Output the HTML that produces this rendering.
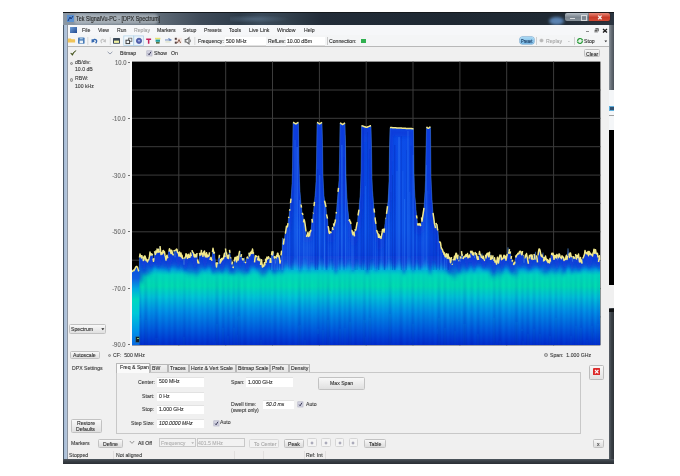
<!DOCTYPE html>
<html><head><meta charset="utf-8"><style>
html,body{margin:0;padding:0;background:#fff;width:680px;height:476px;overflow:hidden;position:relative}
.t{position:absolute;white-space:nowrap;font-family:"Liberation Sans", sans-serif;line-height:1.2;transform:scaleX(0.86);transform-origin:0 50%;filter:blur(0.2px);-webkit-text-stroke:0.12px}
</style></head><body>
<div style="position:absolute;left:63px;top:12px;width:551px;height:452px;background:#383e44;border-radius:0 0 1.5px 1.5px"></div><div style="position:absolute;left:609px;top:25px;width:5px;height:65px;background:linear-gradient(90deg,#9098a0,#6a727a 40%,#4a525a)"></div><div style="position:absolute;left:609px;top:308px;width:5px;height:152px;background:linear-gradient(90deg,#5a6068,#3a4046 50%,#2e3338)"></div><div style="position:absolute;left:609px;top:308.5px;width:5px;height:3px;background:#101214"></div><div style="position:absolute;left:63px;top:459px;width:551px;height:5px;background:linear-gradient(#50565e,#3a4046 40%,#2a2e34)"></div><div style="position:absolute;left:63px;top:25px;width:5px;height:434px;background:linear-gradient(90deg,#4a5868 0,#4a5868 20%,#a9bdd6 30%,#b4c6dc 70%,#7c8088 100%)"></div><div style="position:absolute;left:63px;top:12px;width:551px;height:13px;background:linear-gradient(90deg,#8c98a4 0%,#7a8692 7%,#606c78 17%,#3e4a58 25%,#2e3c4a 32%,#3a4a5a 36%,#34424f 40%,#222c38 47%,#1e2832 70%,#202a34 88%,#2a3440 100%)"></div><div style="position:absolute;left:63px;top:12px;width:551px;height:1px;background:#14181c"></div><div style="position:absolute;left:230px;top:15px;width:60px;height:8px;background:radial-gradient(ellipse at 40% 50%,rgba(120,150,180,0.35),rgba(0,0,0,0) 70%)"></div><div style="position:absolute;left:74px;top:14px;width:84px;height:9.5px;background:rgba(200,208,214,0.55);border-radius:4px;filter:blur(1.2px)"></div><svg style="position:absolute;left:66px;top:14px" width="9" height="9"><rect x="1" y="1" width="7" height="7" fill="#5a90d0"/><path d="M2,7 L4,3 L5,5 L7,2" stroke="#1a3a80" stroke-width="1" fill="none"/></svg><div class="t" style="left:76px;top:15.4px;font-size:6.3px;color:#262626;">Tek SignalVu-PC - [DPX Spectrum]</div><div style="position:absolute;left:549px;top:16.5px;width:15px;height:8px;background:rgba(110,160,220,0.75);border-radius:50%;filter:blur(1.5px)"></div><div style="position:absolute;left:564.5px;top:13.2px;width:24.5px;height:7.8px;background:linear-gradient(#b4bcc4,#7a848e 55%,#8a949c);border-radius:2px 0 0 2px;box-shadow:0 0 0 0.5px rgba(40,50,60,0.6)"></div><div style="position:absolute;left:570px;top:17.5px;width:5px;height:1.3px;background:rgba(240,240,240,0.8)"></div><div style="position:absolute;left:580.5px;top:15px;width:4px;height:3.5px;border:0.7px solid rgba(240,240,240,0.75)"></div><div style="position:absolute;left:589px;top:13.2px;width:20.5px;height:7.8px;background:linear-gradient(#e88878,#c83a28 55%,#d04a34);border-radius:0 2px 2px 0;box-shadow:0 0 0 0.5px rgba(60,20,20,0.6)"></div><svg style="position:absolute;left:596.5px;top:14.8px" width="6" height="5"><path d="M1.2,0.6 L4.6,4.2 M4.6,0.6 L1.2,4.2" fill="none" stroke="#f4f4f4" stroke-width="1.3"/></svg><div style="position:absolute;left:68px;top:25px;width:541px;height:434px;background:#f0f0f0"></div><div style="position:absolute;left:68px;top:25px;width:541px;height:10px;background:#f6f7f9"></div><div style="position:absolute;left:70px;top:27px;width:7px;height:6px;background:linear-gradient(135deg,#70a0d8,#204890)"></div><div class="t" style="left:82px;top:27.2px;font-size:6px;color:#2e2e2e;">File</div><div class="t" style="left:98px;top:27.2px;font-size:6px;color:#2e2e2e;">View</div><div class="t" style="left:117px;top:27.2px;font-size:6px;color:#2e2e2e;">Run</div><div class="t" style="left:134px;top:27.2px;font-size:6px;color:#a0a0a0;">Replay</div><div class="t" style="left:157px;top:27.2px;font-size:6px;color:#2e2e2e;">Markers</div><div class="t" style="left:183px;top:27.2px;font-size:6px;color:#2e2e2e;">Setup</div><div class="t" style="left:204px;top:27.2px;font-size:6px;color:#2e2e2e;">Presets</div><div class="t" style="left:229px;top:27.2px;font-size:6px;color:#2e2e2e;">Tools</div><div class="t" style="left:249px;top:27.2px;font-size:6px;color:#2e2e2e;">Live Link</div><div class="t" style="left:277px;top:27.2px;font-size:6px;color:#2e2e2e;">Window</div><div class="t" style="left:303.5px;top:27.2px;font-size:6px;color:#2e2e2e;">Help</div><div style="position:absolute;left:586px;top:31.2px;width:3px;height:0.8px;background:#8a8a8a"></div><svg style="position:absolute;left:593.8px;top:28px" width="5" height="5"><rect x="1.4" y="0.3" width="3.2" height="3" fill="#333"/><rect x="0.4" y="1.5" width="3.2" height="3" fill="#333" stroke="#f6f7f9" stroke-width="0.5"/><rect x="1.2" y="2.6" width="1.6" height="1.2" fill="#bbb"/></svg><svg style="position:absolute;left:602px;top:27.6px" width="6" height="6"><path d="M1,1 L5,4.6 M5,1 L1,4.6" stroke="#1a1a1a" stroke-width="1.3"/></svg><div style="position:absolute;left:68px;top:35px;width:541px;height:11px;background:#f4f5f6"></div><div style="position:absolute;left:68px;top:46px;width:541px;height:1px;background:#b8b8b8"></div><svg style="position:absolute;left:0;top:0" width="680" height="60">
<g filter="url(#ib)">
<path d="M67.8,39.2 q0,-0.8 0.8,-0.8 h2.2 l0.8,0.8 h3 q0.5,0 0.5,0.6 v2.6 h-7.3z" fill="#f0c458"/>
<rect x="78" y="37.6" width="6.6" height="6.2" rx="0.7" fill="#4a7cb8"/>
<rect x="79.6" y="40.6" width="3.4" height="2.6" fill="#eef4f8"/>
<rect x="79.8" y="37.8" width="3" height="1.6" fill="#9ec0e0"/>
<line x1="87.8" y1="37" x2="87.8" y2="45" stroke="#d0d0d0" stroke-width="0.8"/>
<path d="M92.2,39.2 l0,2.6 l2.2,-0.6 M92.6,41.2 q1.6,-3 3.6,-1.2 q1.2,1.2 -0.6,3.2" fill="none" stroke="#3468b0" stroke-width="1.3"/>
<path d="M105.4,39.2 l0,2.6 l-2.2,-0.6 M105,41.2 q-1.6,-3 -3.6,-1.2 q-1.2,1.2 0.6,3.2" fill="none" stroke="#c4c4c4" stroke-width="1.1"/>
<line x1="110.3" y1="37" x2="110.3" y2="45" stroke="#d0d0d0" stroke-width="0.8"/>
<rect x="113" y="38" width="7" height="5.7" rx="0.6" fill="#3a4a58"/>
<rect x="114" y="40.6" width="5" height="2.3" fill="#f0f0a0"/>
<rect x="123.8" y="35.9" width="9.8" height="9.5" fill="#f2f8fc" stroke="#b4d4ea" stroke-width="0.8"/>
<rect x="133.8" y="35.9" width="9.6" height="9.5" fill="#eaf3fa" stroke="#b4d4ea" stroke-width="0.8"/>
<rect x="128.6" y="38.2" width="3.2" height="3.2" fill="none" stroke="#707070" stroke-width="0.9"/>
<rect x="126" y="40.2" width="3.6" height="3.4" fill="#f2f8fc" stroke="#404040" stroke-width="1"/>
<circle cx="139" cy="40.8" r="2.6" fill="#5868b8" stroke="#404c98" stroke-width="0.8"/>
<circle cx="139" cy="40.8" r="0.8" fill="#d8e0f0"/>
<path d="M146.2,38.6 h4.9 v1.3 h-1.7 v3.8 h-1.5 v-3.8 h-1.7z" fill="#c8205c"/>
<rect x="155" y="37.8" width="5.4" height="1.6" fill="#e8e070"/>
<rect x="155.6" y="39.6" width="4.4" height="2.2" fill="#20a0a0"/>
<rect x="156" y="42" width="3.6" height="1.6" fill="#5a7040"/>
<path d="M165,40 h5.8 M168.4,38.4 l2.6,1.6 l-2.6,1.6" fill="none" stroke="#6a88c0" stroke-width="1.1"/>
<rect x="165.4" y="40.8" width="5" height="2" fill="#e4e8d8"/>
<rect x="174.8" y="37.8" width="7" height="5.9" fill="#f4e6e2"/>
<rect x="174.8" y="37.8" width="2" height="2" fill="#504040"/>
<rect x="174.8" y="41.7" width="2" height="2" fill="#504040"/>
<path d="M177.4,43 l1.6,-3.4 l1.6,3.4" fill="none" stroke="#805040" stroke-width="0.9"/>
<path d="M185.2,39.6 h1.4 l2.4,-1.9 v6.2 l-2.4,-1.9 h-1.4z" fill="none" stroke="#6a6a6a" stroke-width="1.1"/>
<path d="M190,39.4 q1,1.4 0,2.8" fill="none" stroke="#6a6a6a" stroke-width="0.9"/>
<line x1="194.8" y1="37" x2="194.8" y2="45" stroke="#d0d0d0" stroke-width="0.8"/>
</g>
<defs><filter id="ib"><feGaussianBlur stdDeviation="0.25"/></filter></defs>
</svg><div class="t" style="left:198.2px;top:38.2px;font-size:6px;color:#2e2e2e;">Frequency:</div><div style="position:absolute;left:224.5px;top:37px;width:41px;height:8px;background:#fff;border-bottom:1px solid #e0e0e0"></div><div class="t" style="left:225.8px;top:38.2px;font-size:6px;color:#2e2e2e;">500 MHz</div><div class="t" style="left:268px;top:38.2px;font-size:6px;color:#2e2e2e;">RefLev:</div><div style="position:absolute;left:286px;top:37px;width:39px;height:8px;background:#fff;border-bottom:1px solid #e0e0e0"></div><div class="t" style="left:287px;top:38.2px;font-size:6px;color:#2e2e2e;">10.00 dBm</div><div style="position:absolute;left:326.5px;top:37px;width:1px;height:8px;background:#c8c8c8"></div><div class="t" style="left:329px;top:38.2px;font-size:6px;color:#2e2e2e;">Connection:</div><div style="position:absolute;left:360.5px;top:38.8px;width:5px;height:4px;background:#30b050"></div><div style="position:absolute;left:519.5px;top:37.3px;width:14px;height:6.5px;background:linear-gradient(#a8d8f4,#78b8e4);border-radius:2.2px;box-shadow:0 0 0 0.5px #5a98c8"></div><div class="t" style="left:520.9px;top:38.8px;font-size:4.6px;color:#10305a;">Preset</div><div style="position:absolute;left:536px;top:37px;width:1px;height:8px;background:#d0d0d0"></div><div style="position:absolute;left:540.3px;top:38.9px;width:3.2px;height:3.2px;border-radius:50%;background:#b8b8b8;box-shadow:0 0 0 0.6px #d0d0d0"></div><div class="t" style="left:546.2px;top:38.2px;font-size:6px;color:#a8a8a8;">Replay</div><div class="t" style="left:567.5px;top:37.9px;font-size:6px;color:#a0a0a0;">-</div><div style="position:absolute;left:574px;top:37px;width:1px;height:8px;background:#d0d0d0"></div><svg style="position:absolute;left:576px;top:37px" width="8" height="8"><circle cx="4" cy="4" r="2.5" fill="#e8f4e8"/><path d="M6.4,4 A2.4,2.4 0 0 1 2,5.4 M1.6,4 A2.4,2.4 0 0 1 6,2.6" fill="none" stroke="#2a9a3a" stroke-width="1.2"/><path d="M0.6,4.4 L2.6,4.4 L1.6,6.2z M7.4,3.6 L5.4,3.6 L6.4,1.8z" fill="#2a9a3a"/></svg><div class="t" style="left:584.3px;top:38.2px;font-size:6px;color:#2e2e2e;">Stop</div><svg style="position:absolute;left:604px;top:39.8px" width="4" height="3"><path d="M0.4,0.4 L3.2,0.4 L1.8,2.2z" fill="#333"/></svg><svg style="position:absolute;left:69.5px;top:50px" width="7" height="6"><path d="M0.6,3.4 Q1.6,3.8 2.4,5.4 Q3.8,2 6.2,0.5 Q3.6,1.8 2.3,3.9 Q1.6,3.2 0.6,3.4z" fill="#3a4a10" stroke="#3a4a10" stroke-width="0.5"/></svg><svg style="position:absolute;left:106.5px;top:51px" width="6" height="4"><path d="M0.6,0.8 L3,3 L5.4,0.8" fill="none" stroke="#98a0b0" stroke-width="1"/></svg><div class="t" style="left:120px;top:50.3px;font-size:6px;color:#2e2e2e;">Bitmap</div><svg style="position:absolute;left:146.0px;top:49.6px" width="7" height="7"><rect x="0.8" y="0.8" width="5.2" height="5.2" fill="#d4d4e2" stroke="#b0b0c4" stroke-width="0.6"/><path d="M2.2,3.6 L3.1,4.8 L4.9,1.8" fill="none" stroke="#282848" stroke-width="0.9"/></svg><div class="t" style="left:153.8px;top:50.3px;font-size:6px;color:#2e2e2e;">Show</div><div class="t" style="left:170.5px;top:50.3px;font-size:6px;color:#2e2e2e;">On</div><div style="position:absolute;left:584.3px;top:49px;width:15.4px;height:8px;border:0.7px solid #c0c0c0;border-radius:1.5px;background:linear-gradient(#f6f6f6,#e0e0e0);box-sizing:border-box"></div><div class="t" style="left:585.5px;top:50.6px;font-size:6px;color:#2e2e2e;">Clear</div><div style="position:absolute;left:69.8px;top:61.8px;width:1.6px;height:1.6px;border-radius:50%;border:0.7px solid #8a8a8a;background:#c8c8c8"></div><div class="t" style="left:75px;top:59.4px;font-size:6px;color:#3a3a3a;">dB/div:</div><div class="t" style="left:75px;top:66.4px;font-size:6px;color:#3a3a3a;">10.0 dB</div><div style="position:absolute;left:69.8px;top:78.4px;width:1.6px;height:1.6px;border-radius:50%;border:0.7px solid #8a8a8a;background:#c8c8c8"></div><div class="t" style="left:75px;top:75.4px;font-size:6px;color:#3a3a3a;">RBW:</div><div class="t" style="left:75px;top:82.8px;font-size:6px;color:#3a3a3a;">100 kHz</div><div class="t" style="right:554px;top:58.8px;font-size:6.4px;color:#6a6a6a;transform:scaleX(0.92);transform-origin:100% 50%">10.0</div><div style="position:absolute;left:128.2px;top:61.6px;width:1.6px;height:0.9px;background:#707070"></div><div class="t" style="right:554px;top:115.3px;font-size:6.4px;color:#6a6a6a;transform:scaleX(0.92);transform-origin:100% 50%">-10.0</div><div style="position:absolute;left:128.2px;top:118.1px;width:1.6px;height:0.9px;background:#707070"></div><div class="t" style="right:554px;top:171.8px;font-size:6.4px;color:#6a6a6a;transform:scaleX(0.92);transform-origin:100% 50%">-30.0</div><div style="position:absolute;left:128.2px;top:174.6px;width:1.6px;height:0.9px;background:#707070"></div><div class="t" style="right:554px;top:228.4px;font-size:6.4px;color:#6a6a6a;transform:scaleX(0.92);transform-origin:100% 50%">-50.0</div><div style="position:absolute;left:128.2px;top:231.2px;width:1.6px;height:0.9px;background:#707070"></div><div class="t" style="right:554px;top:285.0px;font-size:6.4px;color:#6a6a6a;transform:scaleX(0.92);transform-origin:100% 50%">-70.0</div><div style="position:absolute;left:128.2px;top:287.8px;width:1.6px;height:0.9px;background:#707070"></div><div class="t" style="right:554px;top:341.4px;font-size:6.4px;color:#6a6a6a;transform:scaleX(0.92);transform-origin:100% 50%">-90.0</div><div style="position:absolute;left:128.2px;top:344.2px;width:1.6px;height:0.9px;background:#707070"></div><div style="position:absolute;left:130.4px;top:61px;width:1.4px;height:285px;background:#fafafa"></div><div style="position:absolute;left:69px;top:324px;width:37px;height:10px;border:0.7px solid #c2c2c2;border-radius:1.5px;background:linear-gradient(#f8f8f8,#e0e0e0);box-sizing:border-box"></div><div class="t" style="left:71px;top:326.4px;font-size:6px;color:#2e2e2e;">Spectrum</div><svg style="position:absolute;left:100.6px;top:328px" width="4" height="3"><path d="M0.3,0.3 L3.3,0.3 L1.8,2.3z" fill="#222"/></svg><div style="position:absolute;left:70px;top:350.5px;width:30px;height:8.5px;border:0.7px solid #c2c2c2;border-radius:1.5px;background:linear-gradient(#f8f8f8,#e0e0e0);box-sizing:border-box"></div><div class="t" style="left:73px;top:352.2px;font-size:6px;color:#2e2e2e;">Autoscale</div><div style="position:absolute;left:107.5px;top:353.8px;width:1.6px;height:1.6px;border-radius:50%;border:0.7px solid #8a8a8a;background:#c8c8c8"></div><div class="t" style="left:112.6px;top:352.0px;font-size:6px;color:#3a3a3a;">CF:&nbsp; 500 MHz</div><div style="position:absolute;left:544px;top:353.3px;width:1.6px;height:1.6px;border-radius:50%;border:0.7px solid #8a8a8a;background:#c8c8c8"></div><div class="t" style="left:549.8px;top:351.8px;font-size:6px;color:#3a3a3a;">Span:&nbsp; 1.000 GHz</div><div class="t" style="left:72px;top:364.6px;font-size:6px;color:#3a3a3a;">DPX Settings</div><div style="position:absolute;left:115.6px;top:371.5px;width:465.5px;height:62px;border:0.8px solid #c8c8c8;box-sizing:border-box;background:#f0f0f0"></div><div style="position:absolute;left:115.6px;top:362.5px;width:34.6px;height:10px;border:0.8px solid #b8b8b8;border-bottom:none;background:#fafafa;box-sizing:border-box"></div><div class="t" style="left:120.1px;top:364.4px;font-size:6px;color:#2e2e2e;">Freq &amp; Span</div><div style="position:absolute;left:150.2px;top:364px;width:17.4px;height:7.5px;border:0.8px solid #b8b8b8;border-bottom:none;background:linear-gradient(#f2f2f2,#e4e4e4);box-sizing:border-box"></div><div class="t" style="left:152.39999999999998px;top:365.0px;font-size:6px;color:#2e2e2e;">BW</div><div style="position:absolute;left:167.6px;top:364px;width:21.0px;height:7.5px;border:0.8px solid #b8b8b8;border-bottom:none;background:linear-gradient(#f2f2f2,#e4e4e4);box-sizing:border-box"></div><div class="t" style="left:169.79999999999998px;top:365.0px;font-size:6px;color:#2e2e2e;">Traces</div><div style="position:absolute;left:188.6px;top:364px;width:47.2px;height:7.5px;border:0.8px solid #b8b8b8;border-bottom:none;background:linear-gradient(#f2f2f2,#e4e4e4);box-sizing:border-box"></div><div class="t" style="left:190.79999999999998px;top:365.0px;font-size:6px;color:#2e2e2e;">Horiz &amp; Vert Scale</div><div style="position:absolute;left:235.8px;top:364px;width:34.2px;height:7.5px;border:0.8px solid #b8b8b8;border-bottom:none;background:linear-gradient(#f2f2f2,#e4e4e4);box-sizing:border-box"></div><div class="t" style="left:238.0px;top:365.0px;font-size:6px;color:#2e2e2e;">Bitmap Scale</div><div style="position:absolute;left:270px;top:364px;width:18.7px;height:7.5px;border:0.8px solid #b8b8b8;border-bottom:none;background:linear-gradient(#f2f2f2,#e4e4e4);box-sizing:border-box"></div><div class="t" style="left:272.2px;top:365.0px;font-size:6px;color:#2e2e2e;">Prefs</div><div style="position:absolute;left:288.7px;top:364px;width:21.3px;height:7.5px;border:0.8px solid #b8b8b8;border-bottom:none;background:linear-gradient(#f2f2f2,#e4e4e4);box-sizing:border-box"></div><div class="t" style="left:290.9px;top:365.0px;font-size:6px;color:#2e2e2e;">Density</div><div class="t" style="left:137.8px;top:378.6px;font-size:6px;color:#3a3a3a;">Center:</div><div style="position:absolute;left:157.3px;top:377.0px;width:46.3px;height:9.0px;background:#fff;border-top:0.6px solid #e2e2e2"></div><div class="t" style="left:159px;top:378.4px;font-size:6px;color:#2e2e2e;">500 MHz</div><div class="t" style="left:142px;top:392.8px;font-size:6px;color:#3a3a3a;">Start:</div><div style="position:absolute;left:157.3px;top:391.6px;width:46.3px;height:8.2px;background:#fff;border-top:0.6px solid #e2e2e2"></div><div class="t" style="left:159px;top:392.6px;font-size:6px;color:#2e2e2e;">0 Hz</div><div class="t" style="left:142px;top:406.1px;font-size:6px;color:#3a3a3a;">Stop:</div><div style="position:absolute;left:157.3px;top:405.3px;width:46.3px;height:8.1px;background:#fff;border-top:0.6px solid #e2e2e2"></div><div class="t" style="left:159px;top:406.1px;font-size:6px;color:#2e2e2e;">1.000 GHz</div><div class="t" style="left:131.4px;top:419.8px;font-size:6px;color:#3a3a3a;">Step Size:</div><div style="position:absolute;left:157.3px;top:418.8px;width:46.3px;height:8.4px;background:#fff;border-top:0.6px solid #e2e2e2"></div><div class="t" style="left:159px;top:419.8px;font-size:6px;color:#2e2e2e;font-style:italic">100.0000 MHz</div><svg style="position:absolute;left:212.7px;top:419.5px" width="7" height="7"><rect x="0.8" y="0.8" width="5.2" height="5.2" fill="#d4d4e2" stroke="#b0b0c4" stroke-width="0.6"/><path d="M2.2,3.6 L3.1,4.8 L4.9,1.8" fill="none" stroke="#282848" stroke-width="0.9"/></svg><div class="t" style="left:219.5px;top:419.4px;font-size:6px;color:#3a3a3a;">Auto</div><div class="t" style="left:231.3px;top:378.6px;font-size:6px;color:#3a3a3a;">Span:</div><div style="position:absolute;left:246.4px;top:377.2px;width:47.0px;height:9.0px;background:#fff;border-top:0.6px solid #e2e2e2"></div><div class="t" style="left:248px;top:378.5px;font-size:6px;color:#2e2e2e;">1.000 GHz</div><div style="position:absolute;left:317.6px;top:376.6px;width:47.8px;height:13.2px;border:0.8px solid #c2c2c2;border-radius:1.5px;background:linear-gradient(#f8f8f8,#e0e0e0);box-sizing:border-box"></div><div class="t" style="left:330px;top:380.4px;font-size:6px;color:#2e2e2e;">Max Span</div><div class="t" style="left:230.8px;top:400.6px;font-size:6px;color:#3a3a3a;">Dwell time:</div><div class="t" style="left:230.8px;top:407.4px;font-size:6px;color:#3a3a3a;">(swept only)</div><div style="position:absolute;left:263.2px;top:399.9px;width:31.1px;height:8.5px;background:#fff;border-top:0.6px solid #e2e2e2"></div><div class="t" style="left:265.6px;top:401.0px;font-size:6px;color:#2e2e2e;font-style:italic">50.0 ms</div><svg style="position:absolute;left:297.4px;top:401.4px" width="7" height="7"><rect x="0.8" y="0.8" width="5.2" height="5.2" fill="#d4d4e2" stroke="#b0b0c4" stroke-width="0.6"/><path d="M2.2,3.6 L3.1,4.8 L4.9,1.8" fill="none" stroke="#282848" stroke-width="0.9"/></svg><div class="t" style="left:306px;top:400.8px;font-size:6px;color:#3a3a3a;">Auto</div><div style="position:absolute;left:71px;top:419px;width:31px;height:13.5px;border:0.8px solid #c2c2c2;border-radius:1.5px;background:linear-gradient(#f8f8f8,#e0e0e0);box-sizing:border-box"></div><div class="t" style="left:76.5px;top:419.6px;font-size:6px;color:#2e2e2e;">Restore</div><div class="t" style="left:75.5px;top:425.6px;font-size:6px;color:#2e2e2e;">Defaults</div><div style="position:absolute;left:589px;top:364.5px;width:14.7px;height:15px;border:0.8px solid #bcbcbc;border-radius:1.5px;background:linear-gradient(#f8f8f8,#e2e2e2);box-sizing:border-box"></div><svg style="position:absolute;left:592.6px;top:367.9px" width="7.6" height="7.6"><rect x="0" y="0" width="7.4" height="7.4" rx="1" fill="#dc2a2a"/><path d="M2,2 L5.4,5.4 M5.4,2 L2,5.4" stroke="#fff" stroke-width="1.1"/></svg><div class="t" style="left:71.4px;top:440.0px;font-size:6px;color:#3a3a3a;">Markers</div><div style="position:absolute;left:97.8px;top:438.6px;width:25.6px;height:9.2px;border:0.8px solid #c2c2c2;border-radius:1.5px;background:linear-gradient(#f8f8f8,#dcdcdc);box-sizing:border-box"></div><div class="t" style="left:103px;top:440.6px;font-size:6px;color:#2e2e2e;">Define</div><svg style="position:absolute;left:128.5px;top:440px" width="6" height="5"><path d="M0.8,1 L3,3.4 L5.2,1" fill="none" stroke="#8a8a8a" stroke-width="0.9"/></svg><div class="t" style="left:137.8px;top:440.0px;font-size:6px;color:#2e2e2e;">All Off</div><div style="position:absolute;left:159px;top:438.2px;width:37px;height:9px;border:0.7px solid #c8c8c8;background:#f2f2f2;box-sizing:border-box"></div><div class="t" style="left:160.5px;top:440.0px;font-size:6px;color:#b0b0b0;">Frequency</div><svg style="position:absolute;left:190.8px;top:441.6px" width="4" height="3"><path d="M0.3,0.3 L3.1,0.3 L1.7,2.1z" fill="#b0b0b0"/></svg><div style="position:absolute;left:196.6px;top:438.2px;width:48px;height:9px;border:0.7px solid #c8c8c8;background:#f2f2f2;box-sizing:border-box"></div><div class="t" style="left:198px;top:440.0px;font-size:6px;color:#b0b0b0;">401.5 MHz</div><div style="position:absolute;left:249.4px;top:438.7px;width:30.1px;height:9.3px;border:0.8px solid #d8d8d8;border-radius:1.5px;background:#f2f2f2;box-sizing:border-box"></div><div class="t" style="left:253.5px;top:440.8px;font-size:6px;color:#a8a8a8;">To Center</div><div style="position:absolute;left:283.5px;top:438.7px;width:20.0px;height:9.3px;border:0.8px solid #c2c2c2;border-radius:1.5px;background:linear-gradient(#f8f8f8,#dcdcdc);box-sizing:border-box"></div><div class="t" style="left:287.5px;top:440.8px;font-size:6px;color:#2e2e2e;">Peak</div><div style="position:absolute;left:307.4px;top:438.3px;width:9.6px;height:9.2px;border:0.8px solid #d6d6d6;border-radius:1.5px;background:#f4f4f4;box-sizing:border-box"></div><svg style="position:absolute;left:310.2px;top:441px" width="4" height="4"><path d="M2,0.3 L3.7,2 L2,3.7 L0.3,2z" fill="#a8a8b8"/></svg><div style="position:absolute;left:321.2px;top:438.3px;width:9.6px;height:9.2px;border:0.8px solid #d6d6d6;border-radius:1.5px;background:#f4f4f4;box-sizing:border-box"></div><svg style="position:absolute;left:324.0px;top:441px" width="4" height="4"><path d="M2,0.3 L3.7,2 L2,3.7 L0.3,2z" fill="#a8a8b8"/></svg><div style="position:absolute;left:334.9px;top:438.3px;width:9.6px;height:9.2px;border:0.8px solid #d6d6d6;border-radius:1.5px;background:#f4f4f4;box-sizing:border-box"></div><svg style="position:absolute;left:337.7px;top:441px" width="4" height="4"><path d="M2,0.3 L3.7,2 L2,3.7 L0.3,2z" fill="#a8a8b8"/></svg><div style="position:absolute;left:348.6px;top:438.3px;width:9.6px;height:9.2px;border:0.8px solid #d6d6d6;border-radius:1.5px;background:#f4f4f4;box-sizing:border-box"></div><svg style="position:absolute;left:351.40000000000003px;top:441px" width="4" height="4"><path d="M2,0.3 L3.7,2 L2,3.7 L0.3,2z" fill="#a8a8b8"/></svg><div style="position:absolute;left:363.5px;top:438.7px;width:22.4px;height:9.3px;border:0.8px solid #c2c2c2;border-radius:1.5px;background:linear-gradient(#f8f8f8,#dcdcdc);box-sizing:border-box"></div><div class="t" style="left:368.5px;top:440.8px;font-size:6px;color:#2e2e2e;">Table</div><div style="position:absolute;left:593.2px;top:438.6px;width:11.3px;height:9.0px;border:0.8px solid #c2c2c2;border-radius:1.5px;background:linear-gradient(#f8f8f8,#dcdcdc);box-sizing:border-box"></div><div class="t" style="left:597.3px;top:440.5px;font-size:6px;color:#2e2e2e;">x</div><div style="position:absolute;left:68px;top:449.5px;width:541px;height:0.8px;background:#d8d8d8"></div><div style="position:absolute;left:68px;top:450.3px;width:541px;height:9px;background:#f1eeee"></div><div class="t" style="left:69px;top:452.4px;font-size:6px;color:#3a3a3a;">Stopped</div><div style="position:absolute;left:113px;top:451px;width:0.7px;height:8px;background:#e2dede"></div><div class="t" style="left:116px;top:452.4px;font-size:6px;color:#3a3a3a;">Not aligned</div><div style="position:absolute;left:234px;top:451px;width:0.7px;height:8px;background:#e2dede"></div><div style="position:absolute;left:263px;top:451px;width:0.7px;height:8px;background:#e2dede"></div><div style="position:absolute;left:304px;top:451px;width:0.7px;height:8px;background:#e2dede"></div><div class="t" style="left:305.5px;top:452.4px;font-size:6px;color:#3a3a3a;">Ref: Int</div><div style="position:absolute;left:325px;top:451px;width:0.7px;height:8px;background:#e2dede"></div><div style="position:absolute;left:609px;top:90px;width:5px;height:40px;background:#f4f6f8"></div><div style="position:absolute;left:609.3px;top:105.8px;width:4.7px;height:5.4px;background:#60b0dc"></div><div style="position:absolute;left:610px;top:107.4px;width:4px;height:2.2px;background:#305070"></div><div style="position:absolute;left:609px;top:115px;width:5px;height:1px;background:#a0a0a0"></div><div style="position:absolute;left:609px;top:130px;width:5px;height:155px;background:#000"></div><div style="position:absolute;left:609px;top:285px;width:5px;height:23px;background:#f0f0f0"></div>
<svg width="680" height="476" style="position:absolute;left:0;top:0">
<defs>
<linearGradient id="g" gradientUnits="userSpaceOnUse" x1="0" y1="120" x2="0" y2="345">
<stop offset="0" stop-color="#0c4ce8"/>
<stop offset="0.489" stop-color="#0a4ee4"/>
<stop offset="0.604" stop-color="#0a44dc"/>
<stop offset="0.636" stop-color="#1468e0"/>
<stop offset="0.662" stop-color="#00b0e0"/>
<stop offset="0.69" stop-color="#00d8bc"/>
<stop offset="0.738" stop-color="#00e0b0"/>
<stop offset="0.787" stop-color="#00c8d8"/>
<stop offset="0.853" stop-color="#0094e8"/>
<stop offset="0.924" stop-color="#0064e0"/>
<stop offset="1" stop-color="#0030d0"/>
</linearGradient>
<linearGradient id="g2" gradientUnits="userSpaceOnUse" x1="0" y1="262" x2="0" y2="345">
<stop offset="0" stop-color="#0a44dc"/>
<stop offset="0.2" stop-color="#1060e0"/>
<stop offset="0.32" stop-color="#00a8e0"/>
<stop offset="0.45" stop-color="#00d8c0"/>
<stop offset="0.62" stop-color="#00c8d8"/>
<stop offset="0.85" stop-color="#0090e8"/>
<stop offset="1" stop-color="#0868e0"/>
</linearGradient>
<clipPath id="pc"><rect x="132.0" y="61.6" width="468.4" height="283.7"/></clipPath>
<clipPath id="fc"><path d="M132.0,270.5 L132.5,271.4 L133.0,270.5 L133.5,270.3 L134.0,270.6 L134.5,269.4 L135.0,268.8 L135.5,267.4 L136.0,266.8 L136.5,266.4 L137.0,266.7 L137.5,267.4 L138.0,269.1 L138.5,270.7 L139.0,271.2 L139.5,257.5 L140.0,254.1 L140.5,255.9 L141.0,255.8 L141.5,257.9 L142.0,255.1 L142.5,261.2 L143.0,256.3 L143.5,260.4 L144.0,259.4 L144.5,256.1 L145.0,256.1 L145.5,257.5 L146.0,260.4 L146.5,259.3 L147.0,260.8 L147.5,261.9 L148.0,260.0 L148.5,259.9 L149.0,258.4 L149.5,256.4 L150.0,252.1 L150.5,255.0 L151.0,253.7 L151.5,253.9 L152.0,255.1 L152.5,253.7 L153.0,258.5 L153.5,261.3 L154.0,258.1 L154.5,251.2 L155.0,252.9 L155.5,255.2 L156.0,250.2 L156.5,253.5 L157.0,248.5 L157.5,252.1 L158.0,251.2 L158.5,249.2 L159.0,252.3 L159.5,250.8 L160.0,246.1 L160.5,250.4 L161.0,254.6 L161.5,253.6 L162.0,252.6 L162.5,253.9 L163.0,250.7 L163.5,250.5 L164.0,252.5 L164.5,251.9 L165.0,255.4 L165.5,257.1 L166.0,260.1 L166.5,256.4 L167.0,255.2 L167.5,257.7 L168.0,256.9 L168.5,251.2 L169.0,251.0 L169.5,248.7 L170.0,249.9 L170.5,251.3 L171.0,253.4 L171.5,250.3 L172.0,251.0 L172.5,254.2 L173.0,254.5 L173.5,255.4 L174.0,250.1 L174.5,251.5 L175.0,257.3 L175.5,250.8 L176.0,249.8 L176.5,249.1 L177.0,249.4 L177.5,252.5 L178.0,252.5 L178.5,253.6 L179.0,256.1 L179.5,251.9 L180.0,255.2 L180.5,256.1 L181.0,253.1 L181.5,257.1 L182.0,255.2 L182.5,258.4 L183.0,258.1 L183.5,258.0 L184.0,264.8 L184.5,258.8 L185.0,257.4 L185.5,257.0 L186.0,253.8 L186.5,254.1 L187.0,256.3 L187.5,258.2 L188.0,255.1 L188.5,254.4 L189.0,257.4 L189.5,256.0 L190.0,257.2 L190.5,252.9 L191.0,255.1 L191.5,256.1 L192.0,250.1 L192.5,251.8 L193.0,252.4 L193.5,253.1 L194.0,255.9 L194.5,256.9 L195.0,254.6 L195.5,254.9 L196.0,257.1 L196.5,256.4 L197.0,253.0 L197.5,259.3 L198.0,262.8 L198.5,262.0 L199.0,263.6 L199.5,252.9 L200.0,255.4 L200.5,254.1 L201.0,253.6 L201.5,249.9 L202.0,255.5 L202.5,253.2 L203.0,256.9 L203.5,251.3 L204.0,254.7 L204.5,251.1 L205.0,255.2 L205.5,256.8 L206.0,255.4 L206.5,252.8 L207.0,257.2 L207.5,254.9 L208.0,256.2 L208.5,256.4 L209.0,255.6 L209.5,252.3 L210.0,259.9 L210.5,258.2 L211.0,257.4 L211.5,259.6 L212.0,260.7 L212.5,252.1 L213.0,248.3 L213.5,251.2 L214.0,253.3 L214.5,251.7 L215.0,257.8 L215.5,263.0 L216.0,263.2 L216.5,267.0 L217.0,262.8 L217.5,263.4 L218.0,262.9 L218.5,257.7 L219.0,257.7 L219.5,254.8 L220.0,263.7 L220.5,259.8 L221.0,261.7 L221.5,258.6 L222.0,258.9 L222.5,259.8 L223.0,258.0 L223.5,258.3 L224.0,255.5 L224.5,253.3 L225.0,257.2 L225.5,248.5 L226.0,252.9 L226.5,252.8 L227.0,256.0 L227.5,258.0 L228.0,255.8 L228.5,258.4 L229.0,254.4 L229.5,249.8 L230.0,252.9 L230.5,258.3 L231.0,257.4 L231.5,263.9 L232.0,263.8 L232.5,261.5 L233.0,268.1 L233.5,266.5 L234.0,261.4 L234.5,260.4 L235.0,257.5 L235.5,258.2 L236.0,257.3 L236.5,261.8 L237.0,257.8 L237.5,255.8 L238.0,260.7 L238.5,258.3 L239.0,254.0 L239.5,251.6 L240.0,251.1 L240.5,255.9 L241.0,256.4 L241.5,254.2 L242.0,259.4 L242.5,258.8 L243.0,260.1 L243.5,258.2 L244.0,262.9 L244.5,257.7 L245.0,263.0 L245.5,262.4 L246.0,262.8 L246.5,258.0 L247.0,257.7 L247.5,257.0 L248.0,258.0 L248.5,257.8 L249.0,252.6 L249.5,256.0 L250.0,254.8 L250.5,252.4 L251.0,253.1 L251.5,251.3 L252.0,253.4 L252.5,249.1 L253.0,251.9 L253.5,253.2 L254.0,253.5 L254.5,262.3 L255.0,258.4 L255.5,255.7 L256.0,256.5 L256.5,256.5 L257.0,255.8 L257.5,260.4 L258.0,258.3 L258.5,256.2 L259.0,260.5 L259.5,260.6 L260.0,258.5 L260.5,265.0 L261.0,261.5 L261.5,259.8 L262.0,263.8 L262.5,267.1 L263.0,265.2 L263.5,266.4 L264.0,265.9 L264.5,262.5 L265.0,265.4 L265.5,258.6 L266.0,262.3 L266.5,258.7 L267.0,257.1 L267.5,259.0 L268.0,258.6 L268.5,256.8 L269.0,258.0 L269.5,258.4 L270.0,263.0 L270.5,258.6 L271.0,262.9 L271.5,255.2 L272.0,251.8 L272.5,255.0 L273.0,251.7 L273.5,251.6 L274.0,256.3 L274.5,258.1 L275.0,256.3 L275.5,263.4 L276.0,258.5 L276.5,255.8 L277.0,256.4 L277.5,253.2 L278.0,253.5 L278.5,256.8 L279.0,255.6 L279.5,258.8 L280.0,263.1 L280.5,260.1 L281.0,255.3 L281.5,251.3 L282.0,251.2 L282.5,237.9 L283.0,244.4 L283.5,243.8 L284.0,239.4 L284.5,238.5 L285.0,233.6 L285.5,233.0 L286.0,229.7 L286.5,226.2 L287.0,227.0 L287.5,226.5 L288.0,223.2 L288.5,218.0 L289.0,216.8 L289.5,210.7 L290.0,209.2 L290.5,203.0 L291.0,198.6 L291.5,192.2 L292.0,183.5 L292.5,167.5 L293.0,122.4 L293.5,122.5 L294.0,122.8 L294.5,123.1 L295.0,123.4 L295.5,123.8 L296.0,123.8 L296.5,123.5 L297.0,123.2 L297.5,122.9 L298.0,122.5 L298.5,122.4 L299.0,162.0 L299.5,181.1 L300.0,191.2 L300.5,197.6 L301.0,204.5 L301.5,207.6 L302.0,212.8 L302.5,213.6 L303.0,215.0 L303.5,222.3 L304.0,219.6 L304.5,220.8 L305.0,223.7 L305.5,227.3 L306.0,231.4 L306.5,237.0 L307.0,235.2 L307.5,234.6 L308.0,232.5 L308.5,236.4 L309.0,234.4 L309.5,235.8 L310.0,231.4 L310.5,231.6 L311.0,229.8 L311.5,224.6 L312.0,218.8 L312.5,222.6 L313.0,213.4 L313.5,212.7 L314.0,206.2 L314.5,201.9 L315.0,195.4 L315.5,190.2 L316.0,181.1 L316.5,162.0 L317.0,122.4 L317.5,122.5 L318.0,122.9 L318.5,123.2 L319.0,123.6 L319.5,123.9 L320.0,123.7 L320.5,123.4 L321.0,123.0 L321.5,122.7 L322.0,122.4 L322.5,142.5 L323.0,175.4 L323.5,187.3 L324.0,195.8 L324.5,200.6 L325.0,202.8 L325.5,204.6 L326.0,207.0 L326.5,214.4 L327.0,216.4 L327.5,218.6 L328.0,226.1 L328.5,227.9 L329.0,232.2 L329.5,233.4 L330.0,231.6 L330.5,232.6 L331.0,232.6 L331.5,232.9 L332.0,227.8 L332.5,227.7 L333.0,230.1 L333.5,223.3 L334.0,225.9 L334.5,223.6 L335.0,222.0 L335.5,219.3 L336.0,213.4 L336.5,211.9 L337.0,203.6 L337.5,198.5 L338.0,191.8 L338.5,187.8 L339.0,180.2 L339.5,162.6 L340.0,122.9 L340.5,123.1 L341.0,123.4 L341.5,123.8 L342.0,124.1 L342.5,124.5 L343.0,124.3 L343.5,123.9 L344.0,123.6 L344.5,123.2 L345.0,122.9 L345.5,143.1 L346.0,176.1 L346.5,189.5 L347.0,197.9 L347.5,205.5 L348.0,210.4 L348.5,215.1 L349.0,221.1 L349.5,219.8 L350.0,221.7 L350.5,222.0 L351.0,224.0 L351.5,230.5 L352.0,230.4 L352.5,233.2 L353.0,234.8 L353.5,233.2 L354.0,232.0 L354.5,236.4 L355.0,228.9 L355.5,230.4 L356.0,229.0 L356.5,226.2 L357.0,223.1 L357.5,222.2 L358.0,215.5 L358.5,212.7 L359.0,209.6 L359.5,202.7 L360.0,196.7 L360.5,187.4 L361.0,170.9 L361.5,125.8 L362.0,125.8 L362.5,125.9 L363.0,126.1 L363.5,126.3 L364.0,126.5 L364.5,126.7 L365.0,126.8 L365.5,127.0 L366.0,127.2 L366.5,127.3 L367.0,127.2 L367.5,127.0 L368.0,126.8 L368.5,126.6 L369.0,126.4 L369.5,126.2 L370.0,126.0 L370.5,125.8 L371.0,125.8 L371.5,145.9 L372.0,178.5 L372.5,190.4 L373.0,195.5 L373.5,203.5 L374.0,208.5 L374.5,212.7 L375.0,217.3 L375.5,221.5 L376.0,223.8 L376.5,230.0 L377.0,231.2 L377.5,233.1 L378.0,233.5 L378.5,237.3 L379.0,234.6 L379.5,237.5 L380.0,236.6 L380.5,237.6 L381.0,238.4 L381.5,235.5 L382.0,233.5 L382.5,229.5 L383.0,230.6 L383.5,229.4 L384.0,232.2 L384.5,228.4 L385.0,223.3 L385.5,218.5 L386.0,218.3 L386.5,213.8 L387.0,210.1 L387.5,206.2 L388.0,201.1 L388.5,193.2 L389.0,180.8 L389.5,147.6 L390.0,127.5 L390.5,127.6 L391.0,127.6 L391.5,127.6 L392.0,127.6 L392.5,127.7 L393.0,127.7 L393.5,127.7 L394.0,127.7 L394.5,127.8 L395.0,127.8 L395.5,127.8 L396.0,127.8 L396.5,127.9 L397.0,127.9 L397.5,127.9 L398.0,127.9 L398.5,128.0 L399.0,128.0 L399.5,128.0 L400.0,128.0 L400.5,128.1 L401.0,128.1 L401.5,128.1 L402.0,128.2 L402.5,128.2 L403.0,128.2 L403.5,128.2 L404.0,128.3 L404.5,128.3 L405.0,128.3 L405.5,128.3 L406.0,128.4 L406.5,128.4 L407.0,128.4 L407.5,128.4 L408.0,128.5 L408.5,128.5 L409.0,128.5 L409.5,128.5 L410.0,128.6 L410.5,128.6 L411.0,128.6 L411.5,128.6 L412.0,128.7 L412.5,128.7 L413.0,128.7 L413.5,128.7 L414.0,172.6 L414.5,188.9 L415.0,196.9 L415.5,202.7 L416.0,209.5 L416.5,215.3 L417.0,218.5 L417.5,223.3 L418.0,225.1 L418.5,224.8 L419.0,223.8 L419.5,224.9 L420.0,223.6 L420.5,225.5 L421.0,225.0 L421.5,217.5 L422.0,221.2 L422.5,217.4 L423.0,214.4 L423.5,211.1 L424.0,207.8 L424.5,199.9 L425.0,191.2 L425.5,180.4 L426.0,147.1 L426.5,126.9 L427.0,127.4 L427.5,127.8 L428.0,128.3 L428.5,128.3 L429.0,127.9 L429.5,127.5 L430.0,127.0 L430.5,126.9 L431.0,176.4 L431.5,189.9 L432.0,199.3 L432.5,206.5 L433.0,212.8 L433.5,216.4 L434.0,219.8 L434.5,223.8 L435.0,225.7 L435.5,228.2 L436.0,223.0 L436.5,224.0 L437.0,224.9 L437.5,229.3 L438.0,230.6 L438.5,237.2 L439.0,242.3 L439.5,242.0 L440.0,242.0 L440.5,242.8 L441.0,246.4 L441.5,248.5 L442.0,249.1 L442.5,249.7 L443.0,251.9 L443.5,252.0 L444.0,254.4 L444.5,252.9 L445.0,256.1 L445.5,256.9 L446.0,255.5 L446.5,253.8 L447.0,256.1 L447.5,258.8 L448.0,253.5 L448.5,256.6 L449.0,258.6 L449.5,257.5 L450.0,258.9 L450.5,262.7 L451.0,260.4 L451.5,257.0 L452.0,264.0 L452.5,264.7 L453.0,258.9 L453.5,259.8 L454.0,259.4 L454.5,256.2 L455.0,259.8 L455.5,255.5 L456.0,253.2 L456.5,253.6 L457.0,257.7 L457.5,258.7 L458.0,254.6 L458.5,260.5 L459.0,260.9 L459.5,256.2 L460.0,261.8 L460.5,256.4 L461.0,258.6 L461.5,251.1 L462.0,255.4 L462.5,254.2 L463.0,259.0 L463.5,257.4 L464.0,256.8 L464.5,256.4 L465.0,257.0 L465.5,255.6 L466.0,254.6 L466.5,256.4 L467.0,255.7 L467.5,253.6 L468.0,257.8 L468.5,256.9 L469.0,257.0 L469.5,255.0 L470.0,257.7 L470.5,250.7 L471.0,252.7 L471.5,252.4 L472.0,251.3 L472.5,254.6 L473.0,252.4 L473.5,255.1 L474.0,253.2 L474.5,257.8 L475.0,252.1 L475.5,253.5 L476.0,254.6 L476.5,253.6 L477.0,257.8 L477.5,259.4 L478.0,256.8 L478.5,260.0 L479.0,254.9 L479.5,251.5 L480.0,254.3 L480.5,254.5 L481.0,255.7 L481.5,257.9 L482.0,253.4 L482.5,258.8 L483.0,256.1 L483.5,256.5 L484.0,259.2 L484.5,260.3 L485.0,260.5 L485.5,254.7 L486.0,257.9 L486.5,254.9 L487.0,253.6 L487.5,254.8 L488.0,252.9 L488.5,256.7 L489.0,256.8 L489.5,252.3 L490.0,252.8 L490.5,260.0 L491.0,255.6 L491.5,259.0 L492.0,258.6 L492.5,258.3 L493.0,255.4 L493.5,260.6 L494.0,259.8 L494.5,257.7 L495.0,262.1 L495.5,261.0 L496.0,261.3 L496.5,264.1 L497.0,260.6 L497.5,257.2 L498.0,260.1 L498.5,263.0 L499.0,259.3 L499.5,256.8 L500.0,255.1 L500.5,256.2 L501.0,255.2 L501.5,259.7 L502.0,258.5 L502.5,258.9 L503.0,258.5 L503.5,256.9 L504.0,255.2 L504.5,257.9 L505.0,255.9 L505.5,256.5 L506.0,260.2 L506.5,257.9 L507.0,254.6 L507.5,255.6 L508.0,247.3 L508.5,253.8 L509.0,251.9 L509.5,249.0 L510.0,253.7 L510.5,251.3 L511.0,258.8 L511.5,256.0 L512.0,261.6 L512.5,260.4 L513.0,260.3 L513.5,265.1 L514.0,263.0 L514.5,263.8 L515.0,261.5 L515.5,255.5 L516.0,257.0 L516.5,255.4 L517.0,254.8 L517.5,254.4 L518.0,253.3 L518.5,253.9 L519.0,253.7 L519.5,251.7 L520.0,251.3 L520.5,251.3 L521.0,252.5 L521.5,254.7 L522.0,254.4 L522.5,251.0 L523.0,255.6 L523.5,255.3 L524.0,262.7 L524.5,258.1 L525.0,257.9 L525.5,254.9 L526.0,256.1 L526.5,253.6 L527.0,256.1 L527.5,258.6 L528.0,261.8 L528.5,263.7 L529.0,258.7 L529.5,255.5 L530.0,255.7 L530.5,255.9 L531.0,254.9 L531.5,259.0 L532.0,255.0 L532.5,257.7 L533.0,259.4 L533.5,258.9 L534.0,254.0 L534.5,255.6 L535.0,259.6 L535.5,251.8 L536.0,260.1 L536.5,255.3 L537.0,258.1 L537.5,262.3 L538.0,255.3 L538.5,251.6 L539.0,249.1 L539.5,249.1 L540.0,250.3 L540.5,252.6 L541.0,255.6 L541.5,256.3 L542.0,254.9 L542.5,257.6 L543.0,252.6 L543.5,261.5 L544.0,257.4 L544.5,260.3 L545.0,259.4 L545.5,256.1 L546.0,258.5 L546.5,259.2 L547.0,260.9 L547.5,259.6 L548.0,262.5 L548.5,260.5 L549.0,261.3 L549.5,262.9 L550.0,258.6 L550.5,261.7 L551.0,254.2 L551.5,254.2 L552.0,253.2 L552.5,254.8 L553.0,253.2 L553.5,255.8 L554.0,259.3 L554.5,255.5 L555.0,257.8 L555.5,256.2 L556.0,255.3 L556.5,257.9 L557.0,253.8 L557.5,260.2 L558.0,255.0 L558.5,257.7 L559.0,253.9 L559.5,254.4 L560.0,256.2 L560.5,257.3 L561.0,257.8 L561.5,258.6 L562.0,255.8 L562.5,257.0 L563.0,257.1 L563.5,257.2 L564.0,260.5 L564.5,259.6 L565.0,259.6 L565.5,259.1 L566.0,256.6 L566.5,255.3 L567.0,259.5 L567.5,256.0 L568.0,248.4 L568.5,254.4 L569.0,254.2 L569.5,257.4 L570.0,253.0 L570.5,253.1 L571.0,255.9 L571.5,256.5 L572.0,256.7 L572.5,261.6 L573.0,256.1 L573.5,258.1 L574.0,257.1 L574.5,257.9 L575.0,258.6 L575.5,254.0 L576.0,256.4 L576.5,258.9 L577.0,255.4 L577.5,256.5 L578.0,257.2 L578.5,254.1 L579.0,258.4 L579.5,261.9 L580.0,260.2 L580.5,257.6 L581.0,262.1 L581.5,260.0 L582.0,263.6 L582.5,258.4 L583.0,258.0 L583.5,257.0 L584.0,255.6 L584.5,254.4 L585.0,250.5 L585.5,251.8 L586.0,252.9 L586.5,253.6 L587.0,252.7 L587.5,254.0 L588.0,251.4 L588.5,255.7 L589.0,251.4 L589.5,252.2 L590.0,254.3 L590.5,253.5 L591.0,254.8 L591.5,254.4 L592.0,254.8 L592.5,256.0 L593.0,253.3 L593.5,252.0 L594.0,249.2 L594.5,253.2 L595.0,253.1 L595.5,249.7 L596.0,252.4 L596.5,253.8 L597.0,253.1 L597.5,253.5 L598.0,257.3 L598.5,262.0 L599.0,259.1 L599.5,255.7 L600.0,260.1 L600.4,345.3 L132.0,345.3 Z"/></clipPath>
<filter id="bl" x="-5%" y="-50%" width="110%" height="200%"><feGaussianBlur stdDeviation="2.2"/></filter>
<filter id="bl2"><feGaussianBlur stdDeviation="0.9"/></filter>
<filter id="bl4"><feGaussianBlur stdDeviation="0.45"/></filter>
<filter id="bl3" x="-10%" y="-50%" width="120%" height="200%"><feGaussianBlur stdDeviation="1.6"/></filter>
<linearGradient id="sg" x1="0" y1="0" x2="0" y2="1"><stop offset="0" stop-color="#0018a0" stop-opacity="0"/><stop offset="0.45" stop-color="#0018a0" stop-opacity="0.25"/><stop offset="1" stop-color="#0018a0" stop-opacity="0.4"/></linearGradient>
</defs>
<rect x="132.0" y="61.6" width="468.4" height="283.7" fill="#000"/>
<g stroke="#3c3c3c" stroke-width="1"><line x1="178.8" y1="61.6" x2="178.8" y2="345.3"/><line x1="132.0" y1="90.0" x2="600.4" y2="90.0"/><line x1="225.7" y1="61.6" x2="225.7" y2="345.3"/><line x1="132.0" y1="118.3" x2="600.4" y2="118.3"/><line x1="272.5" y1="61.6" x2="272.5" y2="345.3"/><line x1="132.0" y1="146.7" x2="600.4" y2="146.7"/><line x1="319.4" y1="61.6" x2="319.4" y2="345.3"/><line x1="132.0" y1="175.1" x2="600.4" y2="175.1"/><line x1="366.2" y1="61.6" x2="366.2" y2="345.3"/><line x1="132.0" y1="203.4" x2="600.4" y2="203.4"/><line x1="413.0" y1="61.6" x2="413.0" y2="345.3"/><line x1="132.0" y1="231.8" x2="600.4" y2="231.8"/><line x1="459.9" y1="61.6" x2="459.9" y2="345.3"/><line x1="132.0" y1="260.2" x2="600.4" y2="260.2"/><line x1="506.7" y1="61.6" x2="506.7" y2="345.3"/><line x1="132.0" y1="288.6" x2="600.4" y2="288.6"/><line x1="553.6" y1="61.6" x2="553.6" y2="345.3"/><line x1="132.0" y1="316.9" x2="600.4" y2="316.9"/></g>
<g clip-path="url(#pc)">
<path d="M132.0,270.5 L132.5,271.4 L133.0,270.5 L133.5,270.3 L134.0,270.6 L134.5,269.4 L135.0,268.8 L135.5,267.4 L136.0,266.8 L136.5,266.4 L137.0,266.7 L137.5,267.4 L138.0,269.1 L138.5,270.7 L139.0,271.2 L139.5,257.5 L140.0,254.1 L140.5,255.9 L141.0,255.8 L141.5,257.9 L142.0,255.1 L142.5,261.2 L143.0,256.3 L143.5,260.4 L144.0,259.4 L144.5,256.1 L145.0,256.1 L145.5,257.5 L146.0,260.4 L146.5,259.3 L147.0,260.8 L147.5,261.9 L148.0,260.0 L148.5,259.9 L149.0,258.4 L149.5,256.4 L150.0,252.1 L150.5,255.0 L151.0,253.7 L151.5,253.9 L152.0,255.1 L152.5,253.7 L153.0,258.5 L153.5,261.3 L154.0,258.1 L154.5,251.2 L155.0,252.9 L155.5,255.2 L156.0,250.2 L156.5,253.5 L157.0,248.5 L157.5,252.1 L158.0,251.2 L158.5,249.2 L159.0,252.3 L159.5,250.8 L160.0,246.1 L160.5,250.4 L161.0,254.6 L161.5,253.6 L162.0,252.6 L162.5,253.9 L163.0,250.7 L163.5,250.5 L164.0,252.5 L164.5,251.9 L165.0,255.4 L165.5,257.1 L166.0,260.1 L166.5,256.4 L167.0,255.2 L167.5,257.7 L168.0,256.9 L168.5,251.2 L169.0,251.0 L169.5,248.7 L170.0,249.9 L170.5,251.3 L171.0,253.4 L171.5,250.3 L172.0,251.0 L172.5,254.2 L173.0,254.5 L173.5,255.4 L174.0,250.1 L174.5,251.5 L175.0,257.3 L175.5,250.8 L176.0,249.8 L176.5,249.1 L177.0,249.4 L177.5,252.5 L178.0,252.5 L178.5,253.6 L179.0,256.1 L179.5,251.9 L180.0,255.2 L180.5,256.1 L181.0,253.1 L181.5,257.1 L182.0,255.2 L182.5,258.4 L183.0,258.1 L183.5,258.0 L184.0,264.8 L184.5,258.8 L185.0,257.4 L185.5,257.0 L186.0,253.8 L186.5,254.1 L187.0,256.3 L187.5,258.2 L188.0,255.1 L188.5,254.4 L189.0,257.4 L189.5,256.0 L190.0,257.2 L190.5,252.9 L191.0,255.1 L191.5,256.1 L192.0,250.1 L192.5,251.8 L193.0,252.4 L193.5,253.1 L194.0,255.9 L194.5,256.9 L195.0,254.6 L195.5,254.9 L196.0,257.1 L196.5,256.4 L197.0,253.0 L197.5,259.3 L198.0,262.8 L198.5,262.0 L199.0,263.6 L199.5,252.9 L200.0,255.4 L200.5,254.1 L201.0,253.6 L201.5,249.9 L202.0,255.5 L202.5,253.2 L203.0,256.9 L203.5,251.3 L204.0,254.7 L204.5,251.1 L205.0,255.2 L205.5,256.8 L206.0,255.4 L206.5,252.8 L207.0,257.2 L207.5,254.9 L208.0,256.2 L208.5,256.4 L209.0,255.6 L209.5,252.3 L210.0,259.9 L210.5,258.2 L211.0,257.4 L211.5,259.6 L212.0,260.7 L212.5,252.1 L213.0,248.3 L213.5,251.2 L214.0,253.3 L214.5,251.7 L215.0,257.8 L215.5,263.0 L216.0,263.2 L216.5,267.0 L217.0,262.8 L217.5,263.4 L218.0,262.9 L218.5,257.7 L219.0,257.7 L219.5,254.8 L220.0,263.7 L220.5,259.8 L221.0,261.7 L221.5,258.6 L222.0,258.9 L222.5,259.8 L223.0,258.0 L223.5,258.3 L224.0,255.5 L224.5,253.3 L225.0,257.2 L225.5,248.5 L226.0,252.9 L226.5,252.8 L227.0,256.0 L227.5,258.0 L228.0,255.8 L228.5,258.4 L229.0,254.4 L229.5,249.8 L230.0,252.9 L230.5,258.3 L231.0,257.4 L231.5,263.9 L232.0,263.8 L232.5,261.5 L233.0,268.1 L233.5,266.5 L234.0,261.4 L234.5,260.4 L235.0,257.5 L235.5,258.2 L236.0,257.3 L236.5,261.8 L237.0,257.8 L237.5,255.8 L238.0,260.7 L238.5,258.3 L239.0,254.0 L239.5,251.6 L240.0,251.1 L240.5,255.9 L241.0,256.4 L241.5,254.2 L242.0,259.4 L242.5,258.8 L243.0,260.1 L243.5,258.2 L244.0,262.9 L244.5,257.7 L245.0,263.0 L245.5,262.4 L246.0,262.8 L246.5,258.0 L247.0,257.7 L247.5,257.0 L248.0,258.0 L248.5,257.8 L249.0,252.6 L249.5,256.0 L250.0,254.8 L250.5,252.4 L251.0,253.1 L251.5,251.3 L252.0,253.4 L252.5,249.1 L253.0,251.9 L253.5,253.2 L254.0,253.5 L254.5,262.3 L255.0,258.4 L255.5,255.7 L256.0,256.5 L256.5,256.5 L257.0,255.8 L257.5,260.4 L258.0,258.3 L258.5,256.2 L259.0,260.5 L259.5,260.6 L260.0,258.5 L260.5,265.0 L261.0,261.5 L261.5,259.8 L262.0,263.8 L262.5,267.1 L263.0,265.2 L263.5,266.4 L264.0,265.9 L264.5,262.5 L265.0,265.4 L265.5,258.6 L266.0,262.3 L266.5,258.7 L267.0,257.1 L267.5,259.0 L268.0,258.6 L268.5,256.8 L269.0,258.0 L269.5,258.4 L270.0,263.0 L270.5,258.6 L271.0,262.9 L271.5,255.2 L272.0,251.8 L272.5,255.0 L273.0,251.7 L273.5,251.6 L274.0,256.3 L274.5,258.1 L275.0,256.3 L275.5,263.4 L276.0,258.5 L276.5,255.8 L277.0,256.4 L277.5,253.2 L278.0,253.5 L278.5,256.8 L279.0,255.6 L279.5,258.8 L280.0,263.1 L280.5,260.1 L281.0,255.3 L281.5,251.3 L282.0,251.2 L282.5,237.9 L283.0,244.4 L283.5,243.8 L284.0,239.4 L284.5,238.5 L285.0,233.6 L285.5,233.0 L286.0,229.7 L286.5,226.2 L287.0,227.0 L287.5,226.5 L288.0,223.2 L288.5,218.0 L289.0,216.8 L289.5,210.7 L290.0,209.2 L290.5,203.0 L291.0,198.6 L291.5,192.2 L292.0,183.5 L292.5,167.5 L293.0,122.4 L293.5,122.5 L294.0,122.8 L294.5,123.1 L295.0,123.4 L295.5,123.8 L296.0,123.8 L296.5,123.5 L297.0,123.2 L297.5,122.9 L298.0,122.5 L298.5,122.4 L299.0,162.0 L299.5,181.1 L300.0,191.2 L300.5,197.6 L301.0,204.5 L301.5,207.6 L302.0,212.8 L302.5,213.6 L303.0,215.0 L303.5,222.3 L304.0,219.6 L304.5,220.8 L305.0,223.7 L305.5,227.3 L306.0,231.4 L306.5,237.0 L307.0,235.2 L307.5,234.6 L308.0,232.5 L308.5,236.4 L309.0,234.4 L309.5,235.8 L310.0,231.4 L310.5,231.6 L311.0,229.8 L311.5,224.6 L312.0,218.8 L312.5,222.6 L313.0,213.4 L313.5,212.7 L314.0,206.2 L314.5,201.9 L315.0,195.4 L315.5,190.2 L316.0,181.1 L316.5,162.0 L317.0,122.4 L317.5,122.5 L318.0,122.9 L318.5,123.2 L319.0,123.6 L319.5,123.9 L320.0,123.7 L320.5,123.4 L321.0,123.0 L321.5,122.7 L322.0,122.4 L322.5,142.5 L323.0,175.4 L323.5,187.3 L324.0,195.8 L324.5,200.6 L325.0,202.8 L325.5,204.6 L326.0,207.0 L326.5,214.4 L327.0,216.4 L327.5,218.6 L328.0,226.1 L328.5,227.9 L329.0,232.2 L329.5,233.4 L330.0,231.6 L330.5,232.6 L331.0,232.6 L331.5,232.9 L332.0,227.8 L332.5,227.7 L333.0,230.1 L333.5,223.3 L334.0,225.9 L334.5,223.6 L335.0,222.0 L335.5,219.3 L336.0,213.4 L336.5,211.9 L337.0,203.6 L337.5,198.5 L338.0,191.8 L338.5,187.8 L339.0,180.2 L339.5,162.6 L340.0,122.9 L340.5,123.1 L341.0,123.4 L341.5,123.8 L342.0,124.1 L342.5,124.5 L343.0,124.3 L343.5,123.9 L344.0,123.6 L344.5,123.2 L345.0,122.9 L345.5,143.1 L346.0,176.1 L346.5,189.5 L347.0,197.9 L347.5,205.5 L348.0,210.4 L348.5,215.1 L349.0,221.1 L349.5,219.8 L350.0,221.7 L350.5,222.0 L351.0,224.0 L351.5,230.5 L352.0,230.4 L352.5,233.2 L353.0,234.8 L353.5,233.2 L354.0,232.0 L354.5,236.4 L355.0,228.9 L355.5,230.4 L356.0,229.0 L356.5,226.2 L357.0,223.1 L357.5,222.2 L358.0,215.5 L358.5,212.7 L359.0,209.6 L359.5,202.7 L360.0,196.7 L360.5,187.4 L361.0,170.9 L361.5,125.8 L362.0,125.8 L362.5,125.9 L363.0,126.1 L363.5,126.3 L364.0,126.5 L364.5,126.7 L365.0,126.8 L365.5,127.0 L366.0,127.2 L366.5,127.3 L367.0,127.2 L367.5,127.0 L368.0,126.8 L368.5,126.6 L369.0,126.4 L369.5,126.2 L370.0,126.0 L370.5,125.8 L371.0,125.8 L371.5,145.9 L372.0,178.5 L372.5,190.4 L373.0,195.5 L373.5,203.5 L374.0,208.5 L374.5,212.7 L375.0,217.3 L375.5,221.5 L376.0,223.8 L376.5,230.0 L377.0,231.2 L377.5,233.1 L378.0,233.5 L378.5,237.3 L379.0,234.6 L379.5,237.5 L380.0,236.6 L380.5,237.6 L381.0,238.4 L381.5,235.5 L382.0,233.5 L382.5,229.5 L383.0,230.6 L383.5,229.4 L384.0,232.2 L384.5,228.4 L385.0,223.3 L385.5,218.5 L386.0,218.3 L386.5,213.8 L387.0,210.1 L387.5,206.2 L388.0,201.1 L388.5,193.2 L389.0,180.8 L389.5,147.6 L390.0,127.5 L390.5,127.6 L391.0,127.6 L391.5,127.6 L392.0,127.6 L392.5,127.7 L393.0,127.7 L393.5,127.7 L394.0,127.7 L394.5,127.8 L395.0,127.8 L395.5,127.8 L396.0,127.8 L396.5,127.9 L397.0,127.9 L397.5,127.9 L398.0,127.9 L398.5,128.0 L399.0,128.0 L399.5,128.0 L400.0,128.0 L400.5,128.1 L401.0,128.1 L401.5,128.1 L402.0,128.2 L402.5,128.2 L403.0,128.2 L403.5,128.2 L404.0,128.3 L404.5,128.3 L405.0,128.3 L405.5,128.3 L406.0,128.4 L406.5,128.4 L407.0,128.4 L407.5,128.4 L408.0,128.5 L408.5,128.5 L409.0,128.5 L409.5,128.5 L410.0,128.6 L410.5,128.6 L411.0,128.6 L411.5,128.6 L412.0,128.7 L412.5,128.7 L413.0,128.7 L413.5,128.7 L414.0,172.6 L414.5,188.9 L415.0,196.9 L415.5,202.7 L416.0,209.5 L416.5,215.3 L417.0,218.5 L417.5,223.3 L418.0,225.1 L418.5,224.8 L419.0,223.8 L419.5,224.9 L420.0,223.6 L420.5,225.5 L421.0,225.0 L421.5,217.5 L422.0,221.2 L422.5,217.4 L423.0,214.4 L423.5,211.1 L424.0,207.8 L424.5,199.9 L425.0,191.2 L425.5,180.4 L426.0,147.1 L426.5,126.9 L427.0,127.4 L427.5,127.8 L428.0,128.3 L428.5,128.3 L429.0,127.9 L429.5,127.5 L430.0,127.0 L430.5,126.9 L431.0,176.4 L431.5,189.9 L432.0,199.3 L432.5,206.5 L433.0,212.8 L433.5,216.4 L434.0,219.8 L434.5,223.8 L435.0,225.7 L435.5,228.2 L436.0,223.0 L436.5,224.0 L437.0,224.9 L437.5,229.3 L438.0,230.6 L438.5,237.2 L439.0,242.3 L439.5,242.0 L440.0,242.0 L440.5,242.8 L441.0,246.4 L441.5,248.5 L442.0,249.1 L442.5,249.7 L443.0,251.9 L443.5,252.0 L444.0,254.4 L444.5,252.9 L445.0,256.1 L445.5,256.9 L446.0,255.5 L446.5,253.8 L447.0,256.1 L447.5,258.8 L448.0,253.5 L448.5,256.6 L449.0,258.6 L449.5,257.5 L450.0,258.9 L450.5,262.7 L451.0,260.4 L451.5,257.0 L452.0,264.0 L452.5,264.7 L453.0,258.9 L453.5,259.8 L454.0,259.4 L454.5,256.2 L455.0,259.8 L455.5,255.5 L456.0,253.2 L456.5,253.6 L457.0,257.7 L457.5,258.7 L458.0,254.6 L458.5,260.5 L459.0,260.9 L459.5,256.2 L460.0,261.8 L460.5,256.4 L461.0,258.6 L461.5,251.1 L462.0,255.4 L462.5,254.2 L463.0,259.0 L463.5,257.4 L464.0,256.8 L464.5,256.4 L465.0,257.0 L465.5,255.6 L466.0,254.6 L466.5,256.4 L467.0,255.7 L467.5,253.6 L468.0,257.8 L468.5,256.9 L469.0,257.0 L469.5,255.0 L470.0,257.7 L470.5,250.7 L471.0,252.7 L471.5,252.4 L472.0,251.3 L472.5,254.6 L473.0,252.4 L473.5,255.1 L474.0,253.2 L474.5,257.8 L475.0,252.1 L475.5,253.5 L476.0,254.6 L476.5,253.6 L477.0,257.8 L477.5,259.4 L478.0,256.8 L478.5,260.0 L479.0,254.9 L479.5,251.5 L480.0,254.3 L480.5,254.5 L481.0,255.7 L481.5,257.9 L482.0,253.4 L482.5,258.8 L483.0,256.1 L483.5,256.5 L484.0,259.2 L484.5,260.3 L485.0,260.5 L485.5,254.7 L486.0,257.9 L486.5,254.9 L487.0,253.6 L487.5,254.8 L488.0,252.9 L488.5,256.7 L489.0,256.8 L489.5,252.3 L490.0,252.8 L490.5,260.0 L491.0,255.6 L491.5,259.0 L492.0,258.6 L492.5,258.3 L493.0,255.4 L493.5,260.6 L494.0,259.8 L494.5,257.7 L495.0,262.1 L495.5,261.0 L496.0,261.3 L496.5,264.1 L497.0,260.6 L497.5,257.2 L498.0,260.1 L498.5,263.0 L499.0,259.3 L499.5,256.8 L500.0,255.1 L500.5,256.2 L501.0,255.2 L501.5,259.7 L502.0,258.5 L502.5,258.9 L503.0,258.5 L503.5,256.9 L504.0,255.2 L504.5,257.9 L505.0,255.9 L505.5,256.5 L506.0,260.2 L506.5,257.9 L507.0,254.6 L507.5,255.6 L508.0,247.3 L508.5,253.8 L509.0,251.9 L509.5,249.0 L510.0,253.7 L510.5,251.3 L511.0,258.8 L511.5,256.0 L512.0,261.6 L512.5,260.4 L513.0,260.3 L513.5,265.1 L514.0,263.0 L514.5,263.8 L515.0,261.5 L515.5,255.5 L516.0,257.0 L516.5,255.4 L517.0,254.8 L517.5,254.4 L518.0,253.3 L518.5,253.9 L519.0,253.7 L519.5,251.7 L520.0,251.3 L520.5,251.3 L521.0,252.5 L521.5,254.7 L522.0,254.4 L522.5,251.0 L523.0,255.6 L523.5,255.3 L524.0,262.7 L524.5,258.1 L525.0,257.9 L525.5,254.9 L526.0,256.1 L526.5,253.6 L527.0,256.1 L527.5,258.6 L528.0,261.8 L528.5,263.7 L529.0,258.7 L529.5,255.5 L530.0,255.7 L530.5,255.9 L531.0,254.9 L531.5,259.0 L532.0,255.0 L532.5,257.7 L533.0,259.4 L533.5,258.9 L534.0,254.0 L534.5,255.6 L535.0,259.6 L535.5,251.8 L536.0,260.1 L536.5,255.3 L537.0,258.1 L537.5,262.3 L538.0,255.3 L538.5,251.6 L539.0,249.1 L539.5,249.1 L540.0,250.3 L540.5,252.6 L541.0,255.6 L541.5,256.3 L542.0,254.9 L542.5,257.6 L543.0,252.6 L543.5,261.5 L544.0,257.4 L544.5,260.3 L545.0,259.4 L545.5,256.1 L546.0,258.5 L546.5,259.2 L547.0,260.9 L547.5,259.6 L548.0,262.5 L548.5,260.5 L549.0,261.3 L549.5,262.9 L550.0,258.6 L550.5,261.7 L551.0,254.2 L551.5,254.2 L552.0,253.2 L552.5,254.8 L553.0,253.2 L553.5,255.8 L554.0,259.3 L554.5,255.5 L555.0,257.8 L555.5,256.2 L556.0,255.3 L556.5,257.9 L557.0,253.8 L557.5,260.2 L558.0,255.0 L558.5,257.7 L559.0,253.9 L559.5,254.4 L560.0,256.2 L560.5,257.3 L561.0,257.8 L561.5,258.6 L562.0,255.8 L562.5,257.0 L563.0,257.1 L563.5,257.2 L564.0,260.5 L564.5,259.6 L565.0,259.6 L565.5,259.1 L566.0,256.6 L566.5,255.3 L567.0,259.5 L567.5,256.0 L568.0,248.4 L568.5,254.4 L569.0,254.2 L569.5,257.4 L570.0,253.0 L570.5,253.1 L571.0,255.9 L571.5,256.5 L572.0,256.7 L572.5,261.6 L573.0,256.1 L573.5,258.1 L574.0,257.1 L574.5,257.9 L575.0,258.6 L575.5,254.0 L576.0,256.4 L576.5,258.9 L577.0,255.4 L577.5,256.5 L578.0,257.2 L578.5,254.1 L579.0,258.4 L579.5,261.9 L580.0,260.2 L580.5,257.6 L581.0,262.1 L581.5,260.0 L582.0,263.6 L582.5,258.4 L583.0,258.0 L583.5,257.0 L584.0,255.6 L584.5,254.4 L585.0,250.5 L585.5,251.8 L586.0,252.9 L586.5,253.6 L587.0,252.7 L587.5,254.0 L588.0,251.4 L588.5,255.7 L589.0,251.4 L589.5,252.2 L590.0,254.3 L590.5,253.5 L591.0,254.8 L591.5,254.4 L592.0,254.8 L592.5,256.0 L593.0,253.3 L593.5,252.0 L594.0,249.2 L594.5,253.2 L595.0,253.1 L595.5,249.7 L596.0,252.4 L596.5,253.8 L597.0,253.1 L597.5,253.5 L598.0,257.3 L598.5,262.0 L599.0,259.1 L599.5,255.7 L600.0,260.1 L600.4,345.3 L132.0,345.3 Z" fill="url(#g)"/>
<g clip-path="url(#fc)">
<path d="M132.0,275.0 L132.5,275.9 L133.0,275.0 L133.5,274.8 L134.0,275.1 L134.5,273.9 L135.0,273.3 L135.5,271.9 L136.0,271.3 L136.5,270.9 L137.0,271.2 L137.5,271.9 L138.0,273.6 L138.5,275.2 L139.0,275.7 L139.5,262.0 L140.0,258.6 L140.5,260.4 L141.0,260.3 L141.5,262.4 L142.0,259.6 L142.5,265.7 L143.0,260.8 L143.5,264.9 L144.0,263.9 L144.5,260.6 L145.0,260.6 L145.5,262.0 L146.0,264.9 L146.5,263.8 L147.0,265.3 L147.5,266.4 L148.0,264.5 L148.5,264.4 L149.0,262.9 L149.5,260.9 L150.0,256.6 L150.5,259.5 L151.0,258.2 L151.5,258.4 L152.0,259.6 L152.5,258.2 L153.0,263.0 L153.5,265.8 L154.0,262.6 L154.5,255.7 L155.0,257.4 L155.5,259.7 L156.0,254.7 L156.5,258.0 L157.0,253.0 L157.5,256.6 L158.0,255.7 L158.5,253.7 L159.0,256.8 L159.5,255.3 L160.0,250.6 L160.5,254.9 L161.0,259.1 L161.5,258.1 L162.0,257.1 L162.5,258.4 L163.0,255.2 L163.5,255.0 L164.0,257.0 L164.5,256.4 L165.0,259.9 L165.5,261.6 L166.0,264.6 L166.5,260.9 L167.0,259.7 L167.5,262.2 L168.0,261.4 L168.5,255.7 L169.0,255.5 L169.5,253.2 L170.0,254.4 L170.5,255.8 L171.0,257.9 L171.5,254.8 L172.0,255.5 L172.5,258.7 L173.0,259.0 L173.5,259.9 L174.0,254.6 L174.5,256.0 L175.0,261.8 L175.5,255.3 L176.0,254.3 L176.5,253.6 L177.0,253.9 L177.5,257.0 L178.0,257.0 L178.5,258.1 L179.0,260.6 L179.5,256.4 L180.0,259.7 L180.5,260.6 L181.0,257.6 L181.5,261.6 L182.0,259.7 L182.5,262.9 L183.0,262.6 L183.5,262.5 L184.0,269.3 L184.5,263.3 L185.0,261.9 L185.5,261.5 L186.0,258.3 L186.5,258.6 L187.0,260.8 L187.5,262.7 L188.0,259.6 L188.5,258.9 L189.0,261.9 L189.5,260.5 L190.0,261.7 L190.5,257.4 L191.0,259.6 L191.5,260.6 L192.0,254.6 L192.5,256.3 L193.0,256.9 L193.5,257.6 L194.0,260.4 L194.5,261.4 L195.0,259.1 L195.5,259.4 L196.0,261.6 L196.5,260.9 L197.0,257.5 L197.5,263.8 L198.0,267.3 L198.5,266.5 L199.0,268.1 L199.5,257.4 L200.0,259.9 L200.5,258.6 L201.0,258.1 L201.5,254.4 L202.0,260.0 L202.5,257.7 L203.0,261.4 L203.5,255.8 L204.0,259.2 L204.5,255.6 L205.0,259.7 L205.5,261.3 L206.0,259.9 L206.5,257.3 L207.0,261.7 L207.5,259.4 L208.0,260.7 L208.5,260.9 L209.0,260.1 L209.5,256.8 L210.0,264.4 L210.5,262.7 L211.0,261.9 L211.5,264.1 L212.0,265.2 L212.5,256.6 L213.0,252.8 L213.5,255.7 L214.0,257.8 L214.5,256.2 L215.0,262.3 L215.5,267.5 L216.0,267.7 L216.5,271.5 L217.0,267.3 L217.5,267.9 L218.0,267.4 L218.5,262.2 L219.0,262.2 L219.5,259.3 L220.0,268.2 L220.5,264.3 L221.0,266.2 L221.5,263.1 L222.0,263.4 L222.5,264.3 L223.0,262.5 L223.5,262.8 L224.0,260.0 L224.5,257.8 L225.0,261.7 L225.5,253.0 L226.0,257.4 L226.5,257.3 L227.0,260.5 L227.5,262.5 L228.0,260.3 L228.5,262.9 L229.0,258.9 L229.5,254.3 L230.0,257.4 L230.5,262.8 L231.0,261.9 L231.5,268.4 L232.0,268.3 L232.5,266.0 L233.0,272.6 L233.5,271.0 L234.0,265.9 L234.5,264.9 L235.0,262.0 L235.5,262.7 L236.0,261.8 L236.5,266.3 L237.0,262.3 L237.5,260.3 L238.0,265.2 L238.5,262.8 L239.0,258.5 L239.5,256.1 L240.0,255.6 L240.5,260.4 L241.0,260.9 L241.5,258.7 L242.0,263.9 L242.5,263.3 L243.0,264.6 L243.5,262.7 L244.0,267.4 L244.5,262.2 L245.0,267.5 L245.5,266.9 L246.0,267.3 L246.5,262.5 L247.0,262.2 L247.5,261.5 L248.0,262.5 L248.5,262.3 L249.0,257.1 L249.5,260.5 L250.0,259.3 L250.5,256.9 L251.0,257.6 L251.5,255.8 L252.0,257.9 L252.5,253.6 L253.0,256.4 L253.5,257.7 L254.0,258.0 L254.5,266.8 L255.0,262.9 L255.5,260.2 L256.0,261.0 L256.5,261.0 L257.0,260.3 L257.5,264.9 L258.0,262.8 L258.5,260.7 L259.0,265.0 L259.5,265.1 L260.0,263.0 L260.5,269.5 L261.0,266.0 L261.5,264.3 L262.0,268.3 L262.5,271.6 L263.0,269.7 L263.5,270.9 L264.0,270.4 L264.5,267.0 L265.0,269.9 L265.5,263.1 L266.0,266.8 L266.5,263.2 L267.0,261.6 L267.5,263.5 L268.0,263.1 L268.5,261.3 L269.0,262.5 L269.5,262.9 L270.0,267.5 L270.5,263.1 L271.0,267.4 L271.5,259.7 L272.0,256.3 L272.5,259.5 L273.0,256.2 L273.5,256.1 L274.0,260.8 L274.5,262.6 L275.0,260.8 L275.5,267.9 L276.0,263.0 L276.5,260.3 L277.0,260.9 L277.5,257.7 L278.0,258.0 L278.5,261.3 L279.0,260.1 L279.5,263.3 L280.0,267.6 L280.5,264.6 L281.0,259.8 L281.5,255.8 L282.0,255.7 L282.5,242.4 L283.0,248.9 L283.5,248.3 L284.0,243.9 L284.5,243.0 L285.0,238.1 L285.5,237.5 L286.0,234.2 L286.5,230.7 L287.0,231.5 L287.5,231.0 L288.0,227.7 L288.5,222.5 L289.0,221.3 L289.5,215.2 L290.0,213.7 L290.5,207.5 L291.0,203.1 L291.5,196.7 L292.0,188.0 L292.5,172.0 L293.0,126.9 L293.5,127.0 L294.0,127.3 L294.5,127.6 L295.0,127.9 L295.5,128.3 L296.0,128.3 L296.5,128.0 L297.0,127.7 L297.5,127.4 L298.0,127.0 L298.5,126.9 L299.0,166.5 L299.5,185.6 L300.0,195.7 L300.5,202.1 L301.0,209.0 L301.5,212.1 L302.0,217.3 L302.5,218.1 L303.0,219.5 L303.5,226.8 L304.0,224.1 L304.5,225.3 L305.0,228.2 L305.5,231.8 L306.0,235.9 L306.5,241.5 L307.0,239.7 L307.5,239.1 L308.0,237.0 L308.5,240.9 L309.0,238.9 L309.5,240.3 L310.0,235.9 L310.5,236.1 L311.0,234.3 L311.5,229.1 L312.0,223.3 L312.5,227.1 L313.0,217.9 L313.5,217.2 L314.0,210.7 L314.5,206.4 L315.0,199.9 L315.5,194.7 L316.0,185.6 L316.5,166.5 L317.0,126.9 L317.5,127.0 L318.0,127.4 L318.5,127.7 L319.0,128.1 L319.5,128.4 L320.0,128.2 L320.5,127.9 L321.0,127.5 L321.5,127.2 L322.0,126.9 L322.5,147.0 L323.0,179.9 L323.5,191.8 L324.0,200.3 L324.5,205.1 L325.0,207.3 L325.5,209.1 L326.0,211.5 L326.5,218.9 L327.0,220.9 L327.5,223.1 L328.0,230.6 L328.5,232.4 L329.0,236.7 L329.5,237.9 L330.0,236.1 L330.5,237.1 L331.0,237.1 L331.5,237.4 L332.0,232.3 L332.5,232.2 L333.0,234.6 L333.5,227.8 L334.0,230.4 L334.5,228.1 L335.0,226.5 L335.5,223.8 L336.0,217.9 L336.5,216.4 L337.0,208.1 L337.5,203.0 L338.0,196.3 L338.5,192.3 L339.0,184.7 L339.5,167.1 L340.0,127.4 L340.5,127.6 L341.0,127.9 L341.5,128.3 L342.0,128.6 L342.5,129.0 L343.0,128.8 L343.5,128.4 L344.0,128.1 L344.5,127.7 L345.0,127.4 L345.5,147.6 L346.0,180.6 L346.5,194.0 L347.0,202.4 L347.5,210.0 L348.0,214.9 L348.5,219.6 L349.0,225.6 L349.5,224.3 L350.0,226.2 L350.5,226.5 L351.0,228.5 L351.5,235.0 L352.0,234.9 L352.5,237.7 L353.0,239.3 L353.5,237.7 L354.0,236.5 L354.5,240.9 L355.0,233.4 L355.5,234.9 L356.0,233.5 L356.5,230.7 L357.0,227.6 L357.5,226.7 L358.0,220.0 L358.5,217.2 L359.0,214.1 L359.5,207.2 L360.0,201.2 L360.5,191.9 L361.0,175.4 L361.5,130.3 L362.0,130.3 L362.5,130.4 L363.0,130.6 L363.5,130.8 L364.0,131.0 L364.5,131.2 L365.0,131.3 L365.5,131.5 L366.0,131.7 L366.5,131.8 L367.0,131.7 L367.5,131.5 L368.0,131.3 L368.5,131.1 L369.0,130.9 L369.5,130.7 L370.0,130.5 L370.5,130.3 L371.0,130.3 L371.5,150.4 L372.0,183.0 L372.5,194.9 L373.0,200.0 L373.5,208.0 L374.0,213.0 L374.5,217.2 L375.0,221.8 L375.5,226.0 L376.0,228.3 L376.5,234.5 L377.0,235.7 L377.5,237.6 L378.0,238.0 L378.5,241.8 L379.0,239.1 L379.5,242.0 L380.0,241.1 L380.5,242.1 L381.0,242.9 L381.5,240.0 L382.0,238.0 L382.5,234.0 L383.0,235.1 L383.5,233.9 L384.0,236.7 L384.5,232.9 L385.0,227.8 L385.5,223.0 L386.0,222.8 L386.5,218.3 L387.0,214.6 L387.5,210.7 L388.0,205.6 L388.5,197.7 L389.0,185.3 L389.5,152.1 L390.0,132.0 L390.5,132.1 L391.0,132.1 L391.5,132.1 L392.0,132.1 L392.5,132.2 L393.0,132.2 L393.5,132.2 L394.0,132.2 L394.5,132.3 L395.0,132.3 L395.5,132.3 L396.0,132.3 L396.5,132.4 L397.0,132.4 L397.5,132.4 L398.0,132.4 L398.5,132.5 L399.0,132.5 L399.5,132.5 L400.0,132.5 L400.5,132.6 L401.0,132.6 L401.5,132.6 L402.0,132.7 L402.5,132.7 L403.0,132.7 L403.5,132.7 L404.0,132.8 L404.5,132.8 L405.0,132.8 L405.5,132.8 L406.0,132.9 L406.5,132.9 L407.0,132.9 L407.5,132.9 L408.0,133.0 L408.5,133.0 L409.0,133.0 L409.5,133.0 L410.0,133.1 L410.5,133.1 L411.0,133.1 L411.5,133.1 L412.0,133.2 L412.5,133.2 L413.0,133.2 L413.5,133.2 L414.0,177.1 L414.5,193.4 L415.0,201.4 L415.5,207.2 L416.0,214.0 L416.5,219.8 L417.0,223.0 L417.5,227.8 L418.0,229.6 L418.5,229.3 L419.0,228.3 L419.5,229.4 L420.0,228.1 L420.5,230.0 L421.0,229.5 L421.5,222.0 L422.0,225.7 L422.5,221.9 L423.0,218.9 L423.5,215.6 L424.0,212.3 L424.5,204.4 L425.0,195.7 L425.5,184.9 L426.0,151.6 L426.5,131.4 L427.0,131.9 L427.5,132.3 L428.0,132.8 L428.5,132.8 L429.0,132.4 L429.5,132.0 L430.0,131.5 L430.5,131.4 L431.0,180.9 L431.5,194.4 L432.0,203.8 L432.5,211.0 L433.0,217.3 L433.5,220.9 L434.0,224.3 L434.5,228.3 L435.0,230.2 L435.5,232.7 L436.0,227.5 L436.5,228.5 L437.0,229.4 L437.5,233.8 L438.0,235.1 L438.5,241.7 L439.0,246.8 L439.5,246.5 L440.0,246.5 L440.5,247.3 L441.0,250.9 L441.5,253.0 L442.0,253.6 L442.5,254.2 L443.0,256.4 L443.5,256.5 L444.0,258.9 L444.5,257.4 L445.0,260.6 L445.5,261.4 L446.0,260.0 L446.5,258.3 L447.0,260.6 L447.5,263.3 L448.0,258.0 L448.5,261.1 L449.0,263.1 L449.5,262.0 L450.0,263.4 L450.5,267.2 L451.0,264.9 L451.5,261.5 L452.0,268.5 L452.5,269.2 L453.0,263.4 L453.5,264.3 L454.0,263.9 L454.5,260.7 L455.0,264.3 L455.5,260.0 L456.0,257.7 L456.5,258.1 L457.0,262.2 L457.5,263.2 L458.0,259.1 L458.5,265.0 L459.0,265.4 L459.5,260.7 L460.0,266.3 L460.5,260.9 L461.0,263.1 L461.5,255.6 L462.0,259.9 L462.5,258.7 L463.0,263.5 L463.5,261.9 L464.0,261.3 L464.5,260.9 L465.0,261.5 L465.5,260.1 L466.0,259.1 L466.5,260.9 L467.0,260.2 L467.5,258.1 L468.0,262.3 L468.5,261.4 L469.0,261.5 L469.5,259.5 L470.0,262.2 L470.5,255.2 L471.0,257.2 L471.5,256.9 L472.0,255.8 L472.5,259.1 L473.0,256.9 L473.5,259.6 L474.0,257.7 L474.5,262.3 L475.0,256.6 L475.5,258.0 L476.0,259.1 L476.5,258.1 L477.0,262.3 L477.5,263.9 L478.0,261.3 L478.5,264.5 L479.0,259.4 L479.5,256.0 L480.0,258.8 L480.5,259.0 L481.0,260.2 L481.5,262.4 L482.0,257.9 L482.5,263.3 L483.0,260.6 L483.5,261.0 L484.0,263.7 L484.5,264.8 L485.0,265.0 L485.5,259.2 L486.0,262.4 L486.5,259.4 L487.0,258.1 L487.5,259.3 L488.0,257.4 L488.5,261.2 L489.0,261.3 L489.5,256.8 L490.0,257.3 L490.5,264.5 L491.0,260.1 L491.5,263.5 L492.0,263.1 L492.5,262.8 L493.0,259.9 L493.5,265.1 L494.0,264.3 L494.5,262.2 L495.0,266.6 L495.5,265.5 L496.0,265.8 L496.5,268.6 L497.0,265.1 L497.5,261.7 L498.0,264.6 L498.5,267.5 L499.0,263.8 L499.5,261.3 L500.0,259.6 L500.5,260.7 L501.0,259.7 L501.5,264.2 L502.0,263.0 L502.5,263.4 L503.0,263.0 L503.5,261.4 L504.0,259.7 L504.5,262.4 L505.0,260.4 L505.5,261.0 L506.0,264.7 L506.5,262.4 L507.0,259.1 L507.5,260.1 L508.0,251.8 L508.5,258.3 L509.0,256.4 L509.5,253.5 L510.0,258.2 L510.5,255.8 L511.0,263.3 L511.5,260.5 L512.0,266.1 L512.5,264.9 L513.0,264.8 L513.5,269.6 L514.0,267.5 L514.5,268.3 L515.0,266.0 L515.5,260.0 L516.0,261.5 L516.5,259.9 L517.0,259.3 L517.5,258.9 L518.0,257.8 L518.5,258.4 L519.0,258.2 L519.5,256.2 L520.0,255.8 L520.5,255.8 L521.0,257.0 L521.5,259.2 L522.0,258.9 L522.5,255.5 L523.0,260.1 L523.5,259.8 L524.0,267.2 L524.5,262.6 L525.0,262.4 L525.5,259.4 L526.0,260.6 L526.5,258.1 L527.0,260.6 L527.5,263.1 L528.0,266.3 L528.5,268.2 L529.0,263.2 L529.5,260.0 L530.0,260.2 L530.5,260.4 L531.0,259.4 L531.5,263.5 L532.0,259.5 L532.5,262.2 L533.0,263.9 L533.5,263.4 L534.0,258.5 L534.5,260.1 L535.0,264.1 L535.5,256.3 L536.0,264.6 L536.5,259.8 L537.0,262.6 L537.5,266.8 L538.0,259.8 L538.5,256.1 L539.0,253.6 L539.5,253.6 L540.0,254.8 L540.5,257.1 L541.0,260.1 L541.5,260.8 L542.0,259.4 L542.5,262.1 L543.0,257.1 L543.5,266.0 L544.0,261.9 L544.5,264.8 L545.0,263.9 L545.5,260.6 L546.0,263.0 L546.5,263.7 L547.0,265.4 L547.5,264.1 L548.0,267.0 L548.5,265.0 L549.0,265.8 L549.5,267.4 L550.0,263.1 L550.5,266.2 L551.0,258.7 L551.5,258.7 L552.0,257.7 L552.5,259.3 L553.0,257.7 L553.5,260.3 L554.0,263.8 L554.5,260.0 L555.0,262.3 L555.5,260.7 L556.0,259.8 L556.5,262.4 L557.0,258.3 L557.5,264.7 L558.0,259.5 L558.5,262.2 L559.0,258.4 L559.5,258.9 L560.0,260.7 L560.5,261.8 L561.0,262.3 L561.5,263.1 L562.0,260.3 L562.5,261.5 L563.0,261.6 L563.5,261.7 L564.0,265.0 L564.5,264.1 L565.0,264.1 L565.5,263.6 L566.0,261.1 L566.5,259.8 L567.0,264.0 L567.5,260.5 L568.0,252.9 L568.5,258.9 L569.0,258.7 L569.5,261.9 L570.0,257.5 L570.5,257.6 L571.0,260.4 L571.5,261.0 L572.0,261.2 L572.5,266.1 L573.0,260.6 L573.5,262.6 L574.0,261.6 L574.5,262.4 L575.0,263.1 L575.5,258.5 L576.0,260.9 L576.5,263.4 L577.0,259.9 L577.5,261.0 L578.0,261.7 L578.5,258.6 L579.0,262.9 L579.5,266.4 L580.0,264.7 L580.5,262.1 L581.0,266.6 L581.5,264.5 L582.0,268.1 L582.5,262.9 L583.0,262.5 L583.5,261.5 L584.0,260.1 L584.5,258.9 L585.0,255.0 L585.5,256.3 L586.0,257.4 L586.5,258.1 L587.0,257.2 L587.5,258.5 L588.0,255.9 L588.5,260.2 L589.0,255.9 L589.5,256.7 L590.0,258.8 L590.5,258.0 L591.0,259.3 L591.5,258.9 L592.0,259.3 L592.5,260.5 L593.0,257.8 L593.5,256.5 L594.0,253.7 L594.5,257.7 L595.0,257.6 L595.5,254.2 L596.0,256.9 L596.5,258.3 L597.0,257.6 L597.5,258.0 L598.0,261.8 L598.5,266.5 L599.0,263.6 L599.5,260.2 L600.0,264.6" fill="none" stroke="#0834d4" stroke-width="7" opacity="0.65" filter="url(#bl)"/>
<g filter="url(#bl2)"><rect x="132.0" y="262" width="2.9" height="84" fill="url(#sg)" opacity="0.68"/><rect x="137.9" y="262" width="3.2" height="84" fill="url(#sg)" opacity="0.77"/><rect x="144.3" y="262" width="3.1" height="84" fill="url(#sg)" opacity="0.77"/><rect x="150.5" y="262" width="2.0" height="84" fill="url(#sg)" opacity="0.56"/><rect x="154.6" y="262" width="3.4" height="84" fill="url(#sg)" opacity="0.64"/><rect x="161.4" y="262" width="3.4" height="84" fill="url(#sg)" opacity="0.40"/><rect x="168.1" y="262" width="2.7" height="84" fill="url(#sg)" opacity="0.46"/><rect x="173.5" y="262" width="2.8" height="84" fill="url(#sg)" opacity="0.61"/><rect x="179.1" y="262" width="2.0" height="84" fill="url(#sg)" opacity="0.45"/><rect x="183.2" y="262" width="2.4" height="84" fill="url(#sg)" opacity="0.76"/><rect x="188.0" y="262" width="3.1" height="84" fill="url(#sg)" opacity="0.42"/><rect x="194.3" y="262" width="3.2" height="84" fill="url(#sg)" opacity="0.41"/><rect x="200.7" y="262" width="2.9" height="84" fill="url(#sg)" opacity="0.41"/><rect x="206.6" y="262" width="2.0" height="84" fill="url(#sg)" opacity="0.74"/><rect x="210.6" y="262" width="2.3" height="84" fill="url(#sg)" opacity="0.45"/><rect x="215.2" y="262" width="3.5" height="84" fill="url(#sg)" opacity="0.74"/><rect x="222.1" y="262" width="2.4" height="84" fill="url(#sg)" opacity="0.78"/><rect x="227.0" y="262" width="2.8" height="84" fill="url(#sg)" opacity="0.66"/><rect x="232.6" y="262" width="2.3" height="84" fill="url(#sg)" opacity="0.77"/><rect x="237.2" y="262" width="3.0" height="84" fill="url(#sg)" opacity="0.78"/><rect x="243.3" y="262" width="3.3" height="84" fill="url(#sg)" opacity="0.48"/><rect x="250.0" y="262" width="2.5" height="84" fill="url(#sg)" opacity="0.42"/><rect x="255.1" y="262" width="2.2" height="84" fill="url(#sg)" opacity="0.38"/><rect x="259.5" y="262" width="2.5" height="84" fill="url(#sg)" opacity="0.62"/><rect x="264.4" y="262" width="2.0" height="84" fill="url(#sg)" opacity="0.66"/><rect x="268.4" y="262" width="2.5" height="84" fill="url(#sg)" opacity="0.49"/><rect x="273.4" y="262" width="3.2" height="84" fill="url(#sg)" opacity="0.57"/><rect x="279.9" y="262" width="2.5" height="84" fill="url(#sg)" opacity="0.57"/><rect x="284.8" y="262" width="3.1" height="84" fill="url(#sg)" opacity="0.38"/><rect x="291.0" y="262" width="3.5" height="84" fill="url(#sg)" opacity="0.36"/><rect x="297.9" y="262" width="3.1" height="84" fill="url(#sg)" opacity="0.73"/><rect x="304.1" y="262" width="2.0" height="84" fill="url(#sg)" opacity="0.70"/><rect x="308.2" y="262" width="2.5" height="84" fill="url(#sg)" opacity="0.61"/><rect x="313.3" y="262" width="2.0" height="84" fill="url(#sg)" opacity="0.37"/><rect x="317.3" y="262" width="2.3" height="84" fill="url(#sg)" opacity="0.78"/><rect x="321.8" y="262" width="2.3" height="84" fill="url(#sg)" opacity="0.69"/><rect x="326.4" y="262" width="3.4" height="84" fill="url(#sg)" opacity="0.77"/><rect x="333.2" y="262" width="2.5" height="84" fill="url(#sg)" opacity="0.51"/><rect x="338.3" y="262" width="2.8" height="84" fill="url(#sg)" opacity="0.70"/><rect x="343.8" y="262" width="2.2" height="84" fill="url(#sg)" opacity="0.69"/><rect x="348.2" y="262" width="3.2" height="84" fill="url(#sg)" opacity="0.74"/><rect x="354.5" y="262" width="2.1" height="84" fill="url(#sg)" opacity="0.78"/><rect x="358.7" y="262" width="2.1" height="84" fill="url(#sg)" opacity="0.50"/><rect x="362.9" y="262" width="2.9" height="84" fill="url(#sg)" opacity="0.76"/><rect x="368.8" y="262" width="2.5" height="84" fill="url(#sg)" opacity="0.77"/><rect x="373.8" y="262" width="2.8" height="84" fill="url(#sg)" opacity="0.49"/><rect x="379.4" y="262" width="2.5" height="84" fill="url(#sg)" opacity="0.43"/><rect x="384.4" y="262" width="2.1" height="84" fill="url(#sg)" opacity="0.42"/><rect x="388.6" y="262" width="3.0" height="84" fill="url(#sg)" opacity="0.80"/><rect x="394.7" y="262" width="2.2" height="84" fill="url(#sg)" opacity="0.37"/><rect x="399.2" y="262" width="3.5" height="84" fill="url(#sg)" opacity="0.59"/><rect x="406.1" y="262" width="2.6" height="84" fill="url(#sg)" opacity="0.46"/><rect x="411.3" y="262" width="2.9" height="84" fill="url(#sg)" opacity="0.72"/><rect x="417.1" y="262" width="2.7" height="84" fill="url(#sg)" opacity="0.54"/><rect x="422.5" y="262" width="2.1" height="84" fill="url(#sg)" opacity="0.76"/><rect x="426.7" y="262" width="2.0" height="84" fill="url(#sg)" opacity="0.57"/><rect x="430.7" y="262" width="3.3" height="84" fill="url(#sg)" opacity="0.41"/><rect x="437.3" y="262" width="3.1" height="84" fill="url(#sg)" opacity="0.78"/><rect x="443.5" y="262" width="2.9" height="84" fill="url(#sg)" opacity="0.70"/><rect x="449.4" y="262" width="2.2" height="84" fill="url(#sg)" opacity="0.55"/><rect x="453.7" y="262" width="2.2" height="84" fill="url(#sg)" opacity="0.73"/><rect x="458.1" y="262" width="2.4" height="84" fill="url(#sg)" opacity="0.55"/><rect x="463.0" y="262" width="3.5" height="84" fill="url(#sg)" opacity="0.73"/><rect x="470.0" y="262" width="3.5" height="84" fill="url(#sg)" opacity="0.55"/><rect x="476.9" y="262" width="2.7" height="84" fill="url(#sg)" opacity="0.68"/><rect x="482.4" y="262" width="2.7" height="84" fill="url(#sg)" opacity="0.48"/><rect x="487.8" y="262" width="2.6" height="84" fill="url(#sg)" opacity="0.42"/><rect x="493.0" y="262" width="2.6" height="84" fill="url(#sg)" opacity="0.79"/><rect x="498.2" y="262" width="3.4" height="84" fill="url(#sg)" opacity="0.63"/><rect x="505.1" y="262" width="2.7" height="84" fill="url(#sg)" opacity="0.50"/><rect x="510.6" y="262" width="2.1" height="84" fill="url(#sg)" opacity="0.47"/><rect x="514.8" y="262" width="3.2" height="84" fill="url(#sg)" opacity="0.74"/><rect x="521.2" y="262" width="2.5" height="84" fill="url(#sg)" opacity="0.70"/><rect x="526.2" y="262" width="3.2" height="84" fill="url(#sg)" opacity="0.66"/><rect x="532.6" y="262" width="3.0" height="84" fill="url(#sg)" opacity="0.69"/><rect x="538.6" y="262" width="2.5" height="84" fill="url(#sg)" opacity="0.67"/><rect x="543.7" y="262" width="2.4" height="84" fill="url(#sg)" opacity="0.57"/><rect x="548.5" y="262" width="3.2" height="84" fill="url(#sg)" opacity="0.66"/><rect x="554.8" y="262" width="2.4" height="84" fill="url(#sg)" opacity="0.78"/><rect x="559.7" y="262" width="3.0" height="84" fill="url(#sg)" opacity="0.61"/><rect x="565.6" y="262" width="2.0" height="84" fill="url(#sg)" opacity="0.60"/><rect x="569.7" y="262" width="2.4" height="84" fill="url(#sg)" opacity="0.65"/><rect x="574.4" y="262" width="2.7" height="84" fill="url(#sg)" opacity="0.72"/><rect x="579.8" y="262" width="3.0" height="84" fill="url(#sg)" opacity="0.71"/><rect x="585.8" y="262" width="2.5" height="84" fill="url(#sg)" opacity="0.64"/><rect x="590.8" y="262" width="3.1" height="84" fill="url(#sg)" opacity="0.72"/><rect x="597.0" y="262" width="2.5" height="84" fill="url(#sg)" opacity="0.73"/></g>
<g filter="url(#bl3)"><path d="M130.6,256 L139.4,256 L135.0,272.2 Z" fill="#0a3cd8" opacity="0.7"/><path d="M140.1,256 L147.6,256 L143.9,275.2 Z" fill="#0a3cd8" opacity="0.7"/><path d="M147.9,256 L154.9,256 L151.4,273.0 Z" fill="#0a3cd8" opacity="0.7"/><path d="M153.1,256 L163.7,256 L158.4,270.5 Z" fill="#0a3cd8" opacity="0.7"/><path d="M164.4,256 L173.6,256 L169.0,273.7 Z" fill="#0a3cd8" opacity="0.7"/><path d="M174.7,256 L181.8,256 L178.2,272.3 Z" fill="#0a3cd8" opacity="0.7"/><path d="M180.5,256 L190.3,256 L185.4,272.7 Z" fill="#0a3cd8" opacity="0.7"/><path d="M190.3,256 L200.2,256 L195.2,270.9 Z" fill="#0a3cd8" opacity="0.7"/><path d="M201.1,256 L209.1,256 L205.1,270.7 Z" fill="#0a3cd8" opacity="0.7"/><path d="M208.6,256 L217.6,256 L213.1,275.5 Z" fill="#0a3cd8" opacity="0.7"/><path d="M217.4,256 L226.8,256 L222.1,274.6 Z" fill="#0a3cd8" opacity="0.7"/><path d="M227.2,256 L235.7,256 L231.5,274.5 Z" fill="#0a3cd8" opacity="0.7"/><path d="M236.3,256 L243.7,256 L240.0,271.7 Z" fill="#0a3cd8" opacity="0.7"/><path d="M242.6,256 L252.2,256 L247.4,274.4 Z" fill="#0a3cd8" opacity="0.7"/><path d="M252.8,256 L261.4,256 L257.1,270.5 Z" fill="#0a3cd8" opacity="0.7"/><path d="M261.8,256 L269.8,256 L265.8,271.3 Z" fill="#0a3cd8" opacity="0.7"/><path d="M269.8,256 L277.9,256 L273.9,274.9 Z" fill="#0a3cd8" opacity="0.7"/><path d="M278.1,256 L285.9,256 L282.0,275.3 Z" fill="#0a3cd8" opacity="0.7"/><path d="M284.5,256 L295.0,256 L289.8,270.3 Z" fill="#0a3cd8" opacity="0.7"/><path d="M296.0,256 L304.5,256 L300.3,273.0 Z" fill="#0a3cd8" opacity="0.7"/><path d="M305.3,256 L312.4,256 L308.8,272.5 Z" fill="#0a3cd8" opacity="0.7"/><path d="M310.6,256 L321.2,256 L315.9,270.7 Z" fill="#0a3cd8" opacity="0.7"/><path d="M321.8,256 L331.2,256 L326.5,270.7 Z" fill="#0a3cd8" opacity="0.7"/><path d="M331.3,256 L340.6,256 L335.9,275.4 Z" fill="#0a3cd8" opacity="0.7"/><path d="M341.3,256 L349.1,256 L345.2,270.0 Z" fill="#0a3cd8" opacity="0.7"/><path d="M349.4,256 L356.7,256 L353.0,273.2 Z" fill="#0a3cd8" opacity="0.7"/><path d="M356.8,256 L363.9,256 L360.4,270.5 Z" fill="#0a3cd8" opacity="0.7"/><path d="M363.0,256 L371.9,256 L367.4,275.5 Z" fill="#0a3cd8" opacity="0.7"/><path d="M372.1,256 L380.8,256 L376.4,272.4 Z" fill="#0a3cd8" opacity="0.7"/><path d="M380.3,256 L389.9,256 L385.1,270.6 Z" fill="#0a3cd8" opacity="0.7"/><path d="M390.0,256 L399.3,256 L394.7,271.0 Z" fill="#0a3cd8" opacity="0.7"/><path d="M399.3,256 L408.7,256 L404.0,275.7 Z" fill="#0a3cd8" opacity="0.7"/><path d="M409.8,256 L417.0,256 L413.4,273.3 Z" fill="#0a3cd8" opacity="0.7"/><path d="M415.9,256 L425.4,256 L420.6,270.9 Z" fill="#0a3cd8" opacity="0.7"/><path d="M426.0,256 L434.1,256 L430.1,276.0 Z" fill="#0a3cd8" opacity="0.7"/><path d="M432.6,256 L443.6,256 L438.1,270.7 Z" fill="#0a3cd8" opacity="0.7"/><path d="M444.2,256 L454.0,256 L449.1,275.7 Z" fill="#0a3cd8" opacity="0.7"/><path d="M455.0,256 L462.9,256 L459.0,273.7 Z" fill="#0a3cd8" opacity="0.7"/><path d="M463.3,256 L470.5,256 L466.9,272.2 Z" fill="#0a3cd8" opacity="0.7"/><path d="M469.2,256 L478.9,256 L474.1,273.5 Z" fill="#0a3cd8" opacity="0.7"/><path d="M478.7,256 L488.8,256 L483.8,270.5 Z" fill="#0a3cd8" opacity="0.7"/><path d="M489.7,256 L498.1,256 L493.9,275.2 Z" fill="#0a3cd8" opacity="0.7"/><path d="M497.6,256 L506.9,256 L502.3,272.7 Z" fill="#0a3cd8" opacity="0.7"/><path d="M507.3,256 L515.9,256 L511.6,275.9 Z" fill="#0a3cd8" opacity="0.7"/><path d="M515.5,256 L524.8,256 L520.2,270.1 Z" fill="#0a3cd8" opacity="0.7"/><path d="M524.4,256 L534.6,256 L529.5,272.0 Z" fill="#0a3cd8" opacity="0.7"/><path d="M535.3,256 L544.1,256 L539.7,271.3 Z" fill="#0a3cd8" opacity="0.7"/><path d="M544.0,256 L552.8,256 L548.4,271.9 Z" fill="#0a3cd8" opacity="0.7"/><path d="M553.5,256 L560.9,256 L557.2,273.8 Z" fill="#0a3cd8" opacity="0.7"/><path d="M560.9,256 L568.3,256 L564.6,274.7 Z" fill="#0a3cd8" opacity="0.7"/><path d="M568.4,256 L575.5,256 L572.0,274.7 Z" fill="#0a3cd8" opacity="0.7"/><path d="M574.0,256 L584.2,256 L579.1,273.0 Z" fill="#0a3cd8" opacity="0.7"/><path d="M584.4,256 L594.2,256 L589.3,271.5 Z" fill="#0a3cd8" opacity="0.7"/><path d="M594.2,256 L604.1,256 L599.1,272.6 Z" fill="#0a3cd8" opacity="0.7"/></g>
<g filter="url(#bl4)"><rect x="270.0" y="146" width="0.64" height="124" fill="#0028b0" opacity="0.36"/><rect x="271.4" y="186" width="1.07" height="84" fill="#4a9cff" opacity="0.45"/><rect x="273.8" y="184" width="0.86" height="86" fill="#4a9cff" opacity="0.30"/><rect x="275.7" y="130" width="0.55" height="140" fill="#4a9cff" opacity="0.43"/><rect x="276.9" y="177" width="1.04" height="93" fill="#4a9cff" opacity="0.22"/><rect x="279.3" y="171" width="0.82" height="99" fill="#4a9cff" opacity="0.45"/><rect x="281.1" y="177" width="0.56" height="93" fill="#4a9cff" opacity="0.25"/><rect x="282.3" y="137" width="0.95" height="133" fill="#4a9cff" opacity="0.43"/><rect x="284.4" y="159" width="1.06" height="111" fill="#4a9cff" opacity="0.19"/><rect x="286.8" y="136" width="0.89" height="134" fill="#4a9cff" opacity="0.25"/><rect x="288.7" y="131" width="0.96" height="139" fill="#4a9cff" opacity="0.29"/><rect x="290.9" y="182" width="0.66" height="88" fill="#0028b0" opacity="0.35"/><rect x="292.4" y="130" width="1.02" height="140" fill="#0028b0" opacity="0.32"/><rect x="294.6" y="140" width="0.89" height="130" fill="#4a9cff" opacity="0.32"/><rect x="296.6" y="147" width="1.12" height="123" fill="#4a9cff" opacity="0.42"/><rect x="299.1" y="200" width="1.14" height="70" fill="#4a9cff" opacity="0.30"/><rect x="301.6" y="137" width="0.78" height="133" fill="#4a9cff" opacity="0.16"/><rect x="303.4" y="162" width="0.99" height="108" fill="#4a9cff" opacity="0.44"/><rect x="305.6" y="168" width="0.89" height="102" fill="#4a9cff" opacity="0.37"/><rect x="307.5" y="139" width="0.74" height="131" fill="#4a9cff" opacity="0.44"/><rect x="309.2" y="151" width="0.65" height="119" fill="#4a9cff" opacity="0.25"/><rect x="310.6" y="138" width="0.92" height="132" fill="#4a9cff" opacity="0.24"/><rect x="312.7" y="153" width="1.12" height="117" fill="#4a9cff" opacity="0.20"/><rect x="315.2" y="197" width="0.97" height="73" fill="#0028b0" opacity="0.35"/><rect x="317.3" y="169" width="0.80" height="101" fill="#0028b0" opacity="0.45"/><rect x="319.1" y="175" width="1.10" height="95" fill="#4a9cff" opacity="0.30"/><rect x="321.5" y="130" width="1.13" height="140" fill="#0028b0" opacity="0.22"/><rect x="324.0" y="129" width="1.05" height="141" fill="#4a9cff" opacity="0.38"/><rect x="326.4" y="147" width="0.72" height="123" fill="#0028b0" opacity="0.41"/><rect x="328.0" y="190" width="0.80" height="80" fill="#4a9cff" opacity="0.20"/><rect x="329.8" y="181" width="0.95" height="89" fill="#4a9cff" opacity="0.19"/><rect x="331.9" y="164" width="0.84" height="106" fill="#0028b0" opacity="0.23"/><rect x="333.7" y="192" width="1.00" height="78" fill="#4a9cff" opacity="0.16"/><rect x="335.9" y="170" width="0.77" height="100" fill="#4a9cff" opacity="0.20"/><rect x="337.7" y="148" width="0.81" height="122" fill="#4a9cff" opacity="0.32"/><rect x="339.5" y="126" width="0.88" height="144" fill="#0028b0" opacity="0.23"/><rect x="341.4" y="145" width="0.97" height="125" fill="#4a9cff" opacity="0.44"/><rect x="343.6" y="157" width="0.75" height="113" fill="#0028b0" opacity="0.22"/><rect x="345.2" y="135" width="0.97" height="135" fill="#4a9cff" opacity="0.38"/><rect x="347.4" y="173" width="0.60" height="97" fill="#4a9cff" opacity="0.18"/><rect x="348.7" y="174" width="1.04" height="96" fill="#4a9cff" opacity="0.17"/><rect x="351.0" y="155" width="0.62" height="115" fill="#4a9cff" opacity="0.31"/><rect x="352.4" y="139" width="1.10" height="131" fill="#4a9cff" opacity="0.34"/><rect x="354.8" y="182" width="0.78" height="88" fill="#0028b0" opacity="0.36"/><rect x="356.6" y="183" width="0.92" height="87" fill="#0028b0" opacity="0.30"/><rect x="358.6" y="190" width="1.04" height="80" fill="#4a9cff" opacity="0.15"/><rect x="360.9" y="142" width="0.79" height="128" fill="#0028b0" opacity="0.32"/><rect x="362.7" y="128" width="1.15" height="142" fill="#0028b0" opacity="0.33"/><rect x="365.2" y="186" width="0.78" height="84" fill="#4a9cff" opacity="0.24"/><rect x="367.0" y="132" width="1.05" height="138" fill="#0028b0" opacity="0.30"/><rect x="369.3" y="149" width="0.92" height="121" fill="#0028b0" opacity="0.30"/><rect x="371.3" y="164" width="0.87" height="106" fill="#0028b0" opacity="0.24"/><rect x="373.3" y="198" width="0.89" height="72" fill="#4a9cff" opacity="0.17"/><rect x="375.2" y="133" width="0.76" height="137" fill="#4a9cff" opacity="0.25"/><rect x="376.9" y="163" width="0.59" height="107" fill="#4a9cff" opacity="0.17"/><rect x="378.2" y="158" width="1.14" height="112" fill="#0028b0" opacity="0.35"/><rect x="380.8" y="130" width="0.87" height="140" fill="#4a9cff" opacity="0.27"/><rect x="382.7" y="144" width="0.56" height="126" fill="#4a9cff" opacity="0.35"/><rect x="383.9" y="157" width="0.98" height="113" fill="#0028b0" opacity="0.40"/><rect x="386.1" y="162" width="1.04" height="108" fill="#4a9cff" opacity="0.27"/><rect x="388.4" y="128" width="0.94" height="142" fill="#4a9cff" opacity="0.44"/><rect x="390.5" y="192" width="0.65" height="78" fill="#0028b0" opacity="0.26"/><rect x="392.0" y="175" width="1.03" height="95" fill="#0028b0" opacity="0.34"/><rect x="394.2" y="145" width="1.08" height="125" fill="#0028b0" opacity="0.36"/><rect x="396.6" y="171" width="0.84" height="99" fill="#4a9cff" opacity="0.30"/><rect x="398.5" y="137" width="1.06" height="133" fill="#4a9cff" opacity="0.44"/><rect x="400.9" y="136" width="0.67" height="134" fill="#0028b0" opacity="0.41"/><rect x="402.4" y="171" width="0.89" height="99" fill="#4a9cff" opacity="0.17"/><rect x="404.3" y="199" width="0.78" height="71" fill="#4a9cff" opacity="0.37"/><rect x="406.1" y="150" width="0.64" height="120" fill="#0028b0" opacity="0.28"/><rect x="407.5" y="131" width="0.94" height="139" fill="#4a9cff" opacity="0.35"/><rect x="409.6" y="192" width="0.56" height="78" fill="#4a9cff" opacity="0.30"/><rect x="410.8" y="146" width="0.86" height="124" fill="#0028b0" opacity="0.22"/><rect x="412.7" y="155" width="0.78" height="115" fill="#4a9cff" opacity="0.43"/><rect x="414.5" y="138" width="0.83" height="132" fill="#0028b0" opacity="0.35"/><rect x="416.3" y="198" width="0.78" height="72" fill="#4a9cff" opacity="0.23"/><rect x="418.1" y="195" width="0.68" height="75" fill="#0028b0" opacity="0.26"/><rect x="419.6" y="169" width="0.98" height="101" fill="#0028b0" opacity="0.16"/><rect x="421.7" y="143" width="0.79" height="127" fill="#4a9cff" opacity="0.28"/><rect x="423.5" y="198" width="0.54" height="72" fill="#4a9cff" opacity="0.31"/><rect x="424.7" y="153" width="0.66" height="117" fill="#4a9cff" opacity="0.26"/><rect x="426.2" y="165" width="0.63" height="105" fill="#4a9cff" opacity="0.39"/><rect x="427.6" y="191" width="0.57" height="79" fill="#4a9cff" opacity="0.21"/><rect x="428.8" y="194" width="0.69" height="76" fill="#0028b0" opacity="0.32"/><rect x="430.4" y="130" width="1.10" height="140" fill="#0028b0" opacity="0.16"/><rect x="432.8" y="139" width="0.81" height="131" fill="#0028b0" opacity="0.40"/><rect x="434.6" y="165" width="0.58" height="105" fill="#0028b0" opacity="0.39"/><rect x="435.9" y="150" width="0.85" height="120" fill="#0028b0" opacity="0.35"/><rect x="437.8" y="173" width="0.71" height="97" fill="#4a9cff" opacity="0.26"/><rect x="439.4" y="130" width="0.55" height="140" fill="#0028b0" opacity="0.39"/><rect x="440.6" y="152" width="0.86" height="118" fill="#4a9cff" opacity="0.35"/><rect x="442.5" y="162" width="0.76" height="108" fill="#0028b0" opacity="0.20"/><rect x="444.2" y="127" width="0.97" height="143" fill="#4a9cff" opacity="0.35"/><rect x="446.3" y="156" width="0.69" height="114" fill="#4a9cff" opacity="0.26"/><rect x="447.9" y="157" width="0.98" height="113" fill="#0028b0" opacity="0.37"/></g>
</g>
<path d="M132.0,270.5 L132.5,271.4 L133.0,270.5 L133.5,270.3 L134.0,270.6 L134.5,269.4 L135.0,268.8 L135.5,267.4 L136.0,266.8 L136.5,266.4 L137.0,266.7 L137.5,267.4 L138.0,269.1 L138.5,270.7 L139.0,271.2 L139.5,257.5 L139.5,345.3 L132.0,345.3 Z" fill="url(#g2)"/>
<path d="M139.0,271.2 L139.5,257.5 M142.0,255.1 L142.5,261.2 L143.0,256.3 M152.5,253.7 L153.0,258.5 M154.0,258.1 L154.5,251.2 M155.5,255.2 L156.0,250.2 M156.5,253.5 L157.0,248.5 M159.5,250.8 L160.0,246.1 M168.0,256.9 L168.5,251.2 M173.5,255.4 L174.0,250.1 M174.5,251.5 L175.0,257.3 L175.5,250.8 M183.5,258.0 L184.0,264.8 L184.5,258.8 M191.5,256.1 L192.0,250.1 M197.0,253.0 L197.5,259.3 M199.0,263.6 L199.5,252.9 M201.5,249.9 L202.0,255.5 M203.0,256.9 L203.5,251.3 M209.5,252.3 L210.0,259.9 M212.0,260.7 L212.5,252.1 M214.5,251.7 L215.0,257.8 L215.5,263.0 M218.0,262.9 L218.5,257.7 M219.5,254.8 L220.0,263.7 M225.0,257.2 L225.5,248.5 M229.0,254.4 L229.5,249.8 M230.0,252.9 L230.5,258.3 M231.0,257.4 L231.5,263.9 M232.5,261.5 L233.0,268.1 M233.5,266.5 L234.0,261.4 M237.5,255.8 L238.0,260.7 M240.0,251.1 L240.5,255.9 M241.5,254.2 L242.0,259.4 M243.5,258.2 L244.0,262.9 L244.5,257.7 L245.0,263.0 M246.0,262.8 L246.5,258.0 M248.5,257.8 L249.0,252.6 M254.0,253.5 L254.5,262.3 M257.0,255.8 L257.5,260.4 M260.0,258.5 L260.5,265.0 M265.0,265.4 L265.5,258.6 M269.5,258.4 L270.0,263.0 M271.0,262.9 L271.5,255.2 M273.5,251.6 L274.0,256.3 M275.0,256.3 L275.5,263.4 L276.0,258.5 M280.5,260.1 L281.0,255.3 M282.0,251.2 L282.5,237.9 L283.0,244.4 M284.5,238.5 L285.0,233.6 M288.0,223.2 L288.5,218.0 M289.0,216.8 L289.5,210.7 M290.0,209.2 L290.5,203.0 M291.0,198.6 L291.5,192.2 L292.0,183.5 L292.5,167.5 L293.0,122.4 M298.5,122.4 L299.0,162.0 L299.5,181.1 L300.0,191.2 L300.5,197.6 L301.0,204.5 M301.5,207.6 L302.0,212.8 M303.0,215.0 L303.5,222.3 M306.0,231.4 L306.5,237.0 M311.0,229.8 L311.5,224.6 L312.0,218.8 M312.5,222.6 L313.0,213.4 M313.5,212.7 L314.0,206.2 M314.5,201.9 L315.0,195.4 L315.5,190.2 L316.0,181.1 L316.5,162.0 L317.0,122.4 M322.0,122.4 L322.5,142.5 L323.0,175.4 L323.5,187.3 L324.0,195.8 L324.5,200.6 M326.0,207.0 L326.5,214.4 M327.5,218.6 L328.0,226.1 M331.5,232.9 L332.0,227.8 M333.0,230.1 L333.5,223.3 M335.5,219.3 L336.0,213.4 M336.5,211.9 L337.0,203.6 L337.5,198.5 L338.0,191.8 M338.5,187.8 L339.0,180.2 L339.5,162.6 L340.0,122.9 M345.0,122.9 L345.5,143.1 L346.0,176.1 L346.5,189.5 L347.0,197.9 L347.5,205.5 L348.0,210.4 L348.5,215.1 L349.0,221.1 M351.0,224.0 L351.5,230.5 M354.5,236.4 L355.0,228.9 M357.5,222.2 L358.0,215.5 M359.0,209.6 L359.5,202.7 L360.0,196.7 L360.5,187.4 L361.0,170.9 L361.5,125.8 M371.0,125.8 L371.5,145.9 L372.0,178.5 L372.5,190.4 L373.0,195.5 L373.5,203.5 L374.0,208.5 M374.5,212.7 L375.0,217.3 M376.0,223.8 L376.5,230.0 M384.5,228.4 L385.0,223.3 L385.5,218.5 M386.0,218.3 L386.5,213.8 M387.5,206.2 L388.0,201.1 L388.5,193.2 L389.0,180.8 L389.5,147.6 L390.0,127.5 M413.5,128.7 L414.0,172.6 L414.5,188.9 L415.0,196.9 L415.5,202.7 L416.0,209.5 L416.5,215.3 M417.0,218.5 L417.5,223.3 M421.0,225.0 L421.5,217.5 M424.0,207.8 L424.5,199.9 L425.0,191.2 L425.5,180.4 L426.0,147.1 L426.5,126.9 M430.5,126.9 L431.0,176.4 L431.5,189.9 L432.0,199.3 L432.5,206.5 L433.0,212.8 M435.5,228.2 L436.0,223.0 M438.0,230.6 L438.5,237.2 L439.0,242.3 M447.5,258.8 L448.0,253.5 M451.5,257.0 L452.0,264.0 M452.5,264.7 L453.0,258.9 M458.0,254.6 L458.5,260.5 M459.0,260.9 L459.5,256.2 L460.0,261.8 L460.5,256.4 M461.0,258.6 L461.5,251.1 M462.5,254.2 L463.0,259.0 M470.0,257.7 L470.5,250.7 M474.0,253.2 L474.5,257.8 L475.0,252.1 M478.5,260.0 L479.0,254.9 M481.5,257.9 L482.0,253.4 L482.5,258.8 M485.0,260.5 L485.5,254.7 M490.0,252.8 L490.5,260.0 M493.0,255.4 L493.5,260.6 M507.5,255.6 L508.0,247.3 L508.5,253.8 M509.5,249.0 L510.0,253.7 M510.5,251.3 L511.0,258.8 M511.5,256.0 L512.0,261.6 M513.0,260.3 L513.5,265.1 M515.0,261.5 L515.5,255.5 M522.5,251.0 L523.0,255.6 M523.5,255.3 L524.0,262.7 L524.5,258.1 M528.5,263.7 L529.0,258.7 M533.5,258.9 L534.0,254.0 M535.0,259.6 L535.5,251.8 L536.0,260.1 L536.5,255.3 M537.5,262.3 L538.0,255.3 M542.5,257.6 L543.0,252.6 L543.5,261.5 M550.5,261.7 L551.0,254.2 M557.0,253.8 L557.5,260.2 L558.0,255.0 M567.5,256.0 L568.0,248.4 L568.5,254.4 M572.0,256.7 L572.5,261.6 L573.0,256.1 M575.0,258.6 L575.5,254.0 M582.0,263.6 L582.5,258.4 M598.0,257.3 L598.5,262.0" fill="none" stroke="#5a9ae8" stroke-width="0.5" opacity="0.7"/>
<path d="M132.0,270.5 L132.5,271.4 L133.0,270.5 L133.5,270.3 L134.0,270.6 L134.5,269.4 L135.0,268.8 L135.5,267.4 L136.0,266.8 L136.5,266.4 L137.0,266.7 L137.5,267.4 L138.0,269.1 L138.5,270.7 L139.0,271.2 M139.5,257.5 L140.0,254.1 L140.5,255.9 L141.0,255.8 L141.5,257.9 L142.0,255.1 M143.0,256.3 L143.5,260.4 L144.0,259.4 L144.5,256.1 L145.0,256.1 L145.5,257.5 L146.0,260.4 L146.5,259.3 L147.0,260.8 L147.5,261.9 L148.0,260.0 L148.5,259.9 L149.0,258.4 L149.5,256.4 L150.0,252.1 L150.5,255.0 L151.0,253.7 L151.5,253.9 L152.0,255.1 L152.5,253.7 M153.0,258.5 L153.5,261.3 L154.0,258.1 M154.5,251.2 L155.0,252.9 L155.5,255.2 M156.0,250.2 L156.5,253.5 M157.0,248.5 L157.5,252.1 L158.0,251.2 L158.5,249.2 L159.0,252.3 L159.5,250.8 M160.0,246.1 L160.5,250.4 L161.0,254.6 L161.5,253.6 L162.0,252.6 L162.5,253.9 L163.0,250.7 L163.5,250.5 L164.0,252.5 L164.5,251.9 L165.0,255.4 L165.5,257.1 L166.0,260.1 L166.5,256.4 L167.0,255.2 L167.5,257.7 L168.0,256.9 M168.5,251.2 L169.0,251.0 L169.5,248.7 L170.0,249.9 L170.5,251.3 L171.0,253.4 L171.5,250.3 L172.0,251.0 L172.5,254.2 L173.0,254.5 L173.5,255.4 M174.0,250.1 L174.5,251.5 M175.5,250.8 L176.0,249.8 L176.5,249.1 L177.0,249.4 L177.5,252.5 L178.0,252.5 L178.5,253.6 L179.0,256.1 L179.5,251.9 L180.0,255.2 L180.5,256.1 L181.0,253.1 L181.5,257.1 L182.0,255.2 L182.5,258.4 L183.0,258.1 L183.5,258.0 M184.5,258.8 L185.0,257.4 L185.5,257.0 L186.0,253.8 L186.5,254.1 L187.0,256.3 L187.5,258.2 L188.0,255.1 L188.5,254.4 L189.0,257.4 L189.5,256.0 L190.0,257.2 L190.5,252.9 L191.0,255.1 L191.5,256.1 M192.0,250.1 L192.5,251.8 L193.0,252.4 L193.5,253.1 L194.0,255.9 L194.5,256.9 L195.0,254.6 L195.5,254.9 L196.0,257.1 L196.5,256.4 L197.0,253.0 M197.5,259.3 L198.0,262.8 L198.5,262.0 L199.0,263.6 M199.5,252.9 L200.0,255.4 L200.5,254.1 L201.0,253.6 L201.5,249.9 M202.0,255.5 L202.5,253.2 L203.0,256.9 M203.5,251.3 L204.0,254.7 L204.5,251.1 L205.0,255.2 L205.5,256.8 L206.0,255.4 L206.5,252.8 L207.0,257.2 L207.5,254.9 L208.0,256.2 L208.5,256.4 L209.0,255.6 L209.5,252.3 M210.0,259.9 L210.5,258.2 L211.0,257.4 L211.5,259.6 L212.0,260.7 M212.5,252.1 L213.0,248.3 L213.5,251.2 L214.0,253.3 L214.5,251.7 M215.5,263.0 L216.0,263.2 L216.5,267.0 L217.0,262.8 L217.5,263.4 L218.0,262.9 M218.5,257.7 L219.0,257.7 L219.5,254.8 M220.0,263.7 L220.5,259.8 L221.0,261.7 L221.5,258.6 L222.0,258.9 L222.5,259.8 L223.0,258.0 L223.5,258.3 L224.0,255.5 L224.5,253.3 L225.0,257.2 M225.5,248.5 L226.0,252.9 L226.5,252.8 L227.0,256.0 L227.5,258.0 L228.0,255.8 L228.5,258.4 L229.0,254.4 M229.5,249.8 L230.0,252.9 M230.5,258.3 L231.0,257.4 M231.5,263.9 L232.0,263.8 L232.5,261.5 M233.0,268.1 L233.5,266.5 M234.0,261.4 L234.5,260.4 L235.0,257.5 L235.5,258.2 L236.0,257.3 L236.5,261.8 L237.0,257.8 L237.5,255.8 M238.0,260.7 L238.5,258.3 L239.0,254.0 L239.5,251.6 L240.0,251.1 M240.5,255.9 L241.0,256.4 L241.5,254.2 M242.0,259.4 L242.5,258.8 L243.0,260.1 L243.5,258.2 M245.0,263.0 L245.5,262.4 L246.0,262.8 M246.5,258.0 L247.0,257.7 L247.5,257.0 L248.0,258.0 L248.5,257.8 M249.0,252.6 L249.5,256.0 L250.0,254.8 L250.5,252.4 L251.0,253.1 L251.5,251.3 L252.0,253.4 L252.5,249.1 L253.0,251.9 L253.5,253.2 L254.0,253.5 M254.5,262.3 L255.0,258.4 L255.5,255.7 L256.0,256.5 L256.5,256.5 L257.0,255.8 M257.5,260.4 L258.0,258.3 L258.5,256.2 L259.0,260.5 L259.5,260.6 L260.0,258.5 M260.5,265.0 L261.0,261.5 L261.5,259.8 L262.0,263.8 L262.5,267.1 L263.0,265.2 L263.5,266.4 L264.0,265.9 L264.5,262.5 L265.0,265.4 M265.5,258.6 L266.0,262.3 L266.5,258.7 L267.0,257.1 L267.5,259.0 L268.0,258.6 L268.5,256.8 L269.0,258.0 L269.5,258.4 M270.0,263.0 L270.5,258.6 L271.0,262.9 M271.5,255.2 L272.0,251.8 L272.5,255.0 L273.0,251.7 L273.5,251.6 M274.0,256.3 L274.5,258.1 L275.0,256.3 M276.0,258.5 L276.5,255.8 L277.0,256.4 L277.5,253.2 L278.0,253.5 L278.5,256.8 L279.0,255.6 L279.5,258.8 L280.0,263.1 L280.5,260.1 M281.0,255.3 L281.5,251.3 L282.0,251.2 M283.0,244.4 L283.5,243.8 L284.0,239.4 L284.5,238.5 M285.0,233.6 L285.5,233.0 L286.0,229.7 L286.5,226.2 L287.0,227.0 L287.5,226.5 L288.0,223.2 M288.5,218.0 L289.0,216.8 M289.5,210.7 L290.0,209.2 M290.5,203.0 L291.0,198.6 M293.0,122.4 L293.5,122.5 L294.0,122.8 L294.5,123.1 L295.0,123.4 L295.5,123.8 L296.0,123.8 L296.5,123.5 L297.0,123.2 L297.5,122.9 L298.0,122.5 L298.5,122.4 M301.0,204.5 L301.5,207.6 M302.0,212.8 L302.5,213.6 L303.0,215.0 M303.5,222.3 L304.0,219.6 L304.5,220.8 L305.0,223.7 L305.5,227.3 L306.0,231.4 M306.5,237.0 L307.0,235.2 L307.5,234.6 L308.0,232.5 L308.5,236.4 L309.0,234.4 L309.5,235.8 L310.0,231.4 L310.5,231.6 L311.0,229.8 M312.0,218.8 L312.5,222.6 M313.0,213.4 L313.5,212.7 M314.0,206.2 L314.5,201.9 M317.0,122.4 L317.5,122.5 L318.0,122.9 L318.5,123.2 L319.0,123.6 L319.5,123.9 L320.0,123.7 L320.5,123.4 L321.0,123.0 L321.5,122.7 L322.0,122.4 M324.5,200.6 L325.0,202.8 L325.5,204.6 L326.0,207.0 M326.5,214.4 L327.0,216.4 L327.5,218.6 M328.0,226.1 L328.5,227.9 L329.0,232.2 L329.5,233.4 L330.0,231.6 L330.5,232.6 L331.0,232.6 L331.5,232.9 M332.0,227.8 L332.5,227.7 L333.0,230.1 M333.5,223.3 L334.0,225.9 L334.5,223.6 L335.0,222.0 L335.5,219.3 M336.0,213.4 L336.5,211.9 M338.0,191.8 L338.5,187.8 M340.0,122.9 L340.5,123.1 L341.0,123.4 L341.5,123.8 L342.0,124.1 L342.5,124.5 L343.0,124.3 L343.5,123.9 L344.0,123.6 L344.5,123.2 L345.0,122.9 M349.0,221.1 L349.5,219.8 L350.0,221.7 L350.5,222.0 L351.0,224.0 M351.5,230.5 L352.0,230.4 L352.5,233.2 L353.0,234.8 L353.5,233.2 L354.0,232.0 L354.5,236.4 M355.0,228.9 L355.5,230.4 L356.0,229.0 L356.5,226.2 L357.0,223.1 L357.5,222.2 M358.0,215.5 L358.5,212.7 L359.0,209.6 M361.5,125.8 L362.0,125.8 L362.5,125.9 L363.0,126.1 L363.5,126.3 L364.0,126.5 L364.5,126.7 L365.0,126.8 L365.5,127.0 L366.0,127.2 L366.5,127.3 L367.0,127.2 L367.5,127.0 L368.0,126.8 L368.5,126.6 L369.0,126.4 L369.5,126.2 L370.0,126.0 L370.5,125.8 L371.0,125.8 M374.0,208.5 L374.5,212.7 M375.0,217.3 L375.5,221.5 L376.0,223.8 M376.5,230.0 L377.0,231.2 L377.5,233.1 L378.0,233.5 L378.5,237.3 L379.0,234.6 L379.5,237.5 L380.0,236.6 L380.5,237.6 L381.0,238.4 L381.5,235.5 L382.0,233.5 L382.5,229.5 L383.0,230.6 L383.5,229.4 L384.0,232.2 L384.5,228.4 M385.5,218.5 L386.0,218.3 M386.5,213.8 L387.0,210.1 L387.5,206.2 M390.0,127.5 L390.5,127.6 L391.0,127.6 L391.5,127.6 L392.0,127.6 L392.5,127.7 L393.0,127.7 L393.5,127.7 L394.0,127.7 L394.5,127.8 L395.0,127.8 L395.5,127.8 L396.0,127.8 L396.5,127.9 L397.0,127.9 L397.5,127.9 L398.0,127.9 L398.5,128.0 L399.0,128.0 L399.5,128.0 L400.0,128.0 L400.5,128.1 L401.0,128.1 L401.5,128.1 L402.0,128.2 L402.5,128.2 L403.0,128.2 L403.5,128.2 L404.0,128.3 L404.5,128.3 L405.0,128.3 L405.5,128.3 L406.0,128.4 L406.5,128.4 L407.0,128.4 L407.5,128.4 L408.0,128.5 L408.5,128.5 L409.0,128.5 L409.5,128.5 L410.0,128.6 L410.5,128.6 L411.0,128.6 L411.5,128.6 L412.0,128.7 L412.5,128.7 L413.0,128.7 L413.5,128.7 M416.5,215.3 L417.0,218.5 M417.5,223.3 L418.0,225.1 L418.5,224.8 L419.0,223.8 L419.5,224.9 L420.0,223.6 L420.5,225.5 L421.0,225.0 M421.5,217.5 L422.0,221.2 L422.5,217.4 L423.0,214.4 L423.5,211.1 L424.0,207.8 M426.5,126.9 L427.0,127.4 L427.5,127.8 L428.0,128.3 L428.5,128.3 L429.0,127.9 L429.5,127.5 L430.0,127.0 L430.5,126.9 M433.0,212.8 L433.5,216.4 L434.0,219.8 L434.5,223.8 L435.0,225.7 L435.5,228.2 M436.0,223.0 L436.5,224.0 L437.0,224.9 L437.5,229.3 L438.0,230.6 M439.0,242.3 L439.5,242.0 L440.0,242.0 L440.5,242.8 L441.0,246.4 L441.5,248.5 L442.0,249.1 L442.5,249.7 L443.0,251.9 L443.5,252.0 L444.0,254.4 L444.5,252.9 L445.0,256.1 L445.5,256.9 L446.0,255.5 L446.5,253.8 L447.0,256.1 L447.5,258.8 M448.0,253.5 L448.5,256.6 L449.0,258.6 L449.5,257.5 L450.0,258.9 L450.5,262.7 L451.0,260.4 L451.5,257.0 M452.0,264.0 L452.5,264.7 M453.0,258.9 L453.5,259.8 L454.0,259.4 L454.5,256.2 L455.0,259.8 L455.5,255.5 L456.0,253.2 L456.5,253.6 L457.0,257.7 L457.5,258.7 L458.0,254.6 M458.5,260.5 L459.0,260.9 M460.5,256.4 L461.0,258.6 M461.5,251.1 L462.0,255.4 L462.5,254.2 M463.0,259.0 L463.5,257.4 L464.0,256.8 L464.5,256.4 L465.0,257.0 L465.5,255.6 L466.0,254.6 L466.5,256.4 L467.0,255.7 L467.5,253.6 L468.0,257.8 L468.5,256.9 L469.0,257.0 L469.5,255.0 L470.0,257.7 M470.5,250.7 L471.0,252.7 L471.5,252.4 L472.0,251.3 L472.5,254.6 L473.0,252.4 L473.5,255.1 L474.0,253.2 M475.0,252.1 L475.5,253.5 L476.0,254.6 L476.5,253.6 L477.0,257.8 L477.5,259.4 L478.0,256.8 L478.5,260.0 M479.0,254.9 L479.5,251.5 L480.0,254.3 L480.5,254.5 L481.0,255.7 L481.5,257.9 M482.5,258.8 L483.0,256.1 L483.5,256.5 L484.0,259.2 L484.5,260.3 L485.0,260.5 M485.5,254.7 L486.0,257.9 L486.5,254.9 L487.0,253.6 L487.5,254.8 L488.0,252.9 L488.5,256.7 L489.0,256.8 L489.5,252.3 L490.0,252.8 M490.5,260.0 L491.0,255.6 L491.5,259.0 L492.0,258.6 L492.5,258.3 L493.0,255.4 M493.5,260.6 L494.0,259.8 L494.5,257.7 L495.0,262.1 L495.5,261.0 L496.0,261.3 L496.5,264.1 L497.0,260.6 L497.5,257.2 L498.0,260.1 L498.5,263.0 L499.0,259.3 L499.5,256.8 L500.0,255.1 L500.5,256.2 L501.0,255.2 L501.5,259.7 L502.0,258.5 L502.5,258.9 L503.0,258.5 L503.5,256.9 L504.0,255.2 L504.5,257.9 L505.0,255.9 L505.5,256.5 L506.0,260.2 L506.5,257.9 L507.0,254.6 L507.5,255.6 M508.5,253.8 L509.0,251.9 L509.5,249.0 M510.0,253.7 L510.5,251.3 M511.0,258.8 L511.5,256.0 M512.0,261.6 L512.5,260.4 L513.0,260.3 M513.5,265.1 L514.0,263.0 L514.5,263.8 L515.0,261.5 M515.5,255.5 L516.0,257.0 L516.5,255.4 L517.0,254.8 L517.5,254.4 L518.0,253.3 L518.5,253.9 L519.0,253.7 L519.5,251.7 L520.0,251.3 L520.5,251.3 L521.0,252.5 L521.5,254.7 L522.0,254.4 L522.5,251.0 M523.0,255.6 L523.5,255.3 M524.5,258.1 L525.0,257.9 L525.5,254.9 L526.0,256.1 L526.5,253.6 L527.0,256.1 L527.5,258.6 L528.0,261.8 L528.5,263.7 M529.0,258.7 L529.5,255.5 L530.0,255.7 L530.5,255.9 L531.0,254.9 L531.5,259.0 L532.0,255.0 L532.5,257.7 L533.0,259.4 L533.5,258.9 M534.0,254.0 L534.5,255.6 L535.0,259.6 M536.5,255.3 L537.0,258.1 L537.5,262.3 M538.0,255.3 L538.5,251.6 L539.0,249.1 L539.5,249.1 L540.0,250.3 L540.5,252.6 L541.0,255.6 L541.5,256.3 L542.0,254.9 L542.5,257.6 M543.5,261.5 L544.0,257.4 L544.5,260.3 L545.0,259.4 L545.5,256.1 L546.0,258.5 L546.5,259.2 L547.0,260.9 L547.5,259.6 L548.0,262.5 L548.5,260.5 L549.0,261.3 L549.5,262.9 L550.0,258.6 L550.5,261.7 M551.0,254.2 L551.5,254.2 L552.0,253.2 L552.5,254.8 L553.0,253.2 L553.5,255.8 L554.0,259.3 L554.5,255.5 L555.0,257.8 L555.5,256.2 L556.0,255.3 L556.5,257.9 L557.0,253.8 M558.0,255.0 L558.5,257.7 L559.0,253.9 L559.5,254.4 L560.0,256.2 L560.5,257.3 L561.0,257.8 L561.5,258.6 L562.0,255.8 L562.5,257.0 L563.0,257.1 L563.5,257.2 L564.0,260.5 L564.5,259.6 L565.0,259.6 L565.5,259.1 L566.0,256.6 L566.5,255.3 L567.0,259.5 L567.5,256.0 M568.5,254.4 L569.0,254.2 L569.5,257.4 L570.0,253.0 L570.5,253.1 L571.0,255.9 L571.5,256.5 L572.0,256.7 M573.0,256.1 L573.5,258.1 L574.0,257.1 L574.5,257.9 L575.0,258.6 M575.5,254.0 L576.0,256.4 L576.5,258.9 L577.0,255.4 L577.5,256.5 L578.0,257.2 L578.5,254.1 L579.0,258.4 L579.5,261.9 L580.0,260.2 L580.5,257.6 L581.0,262.1 L581.5,260.0 L582.0,263.6 M582.5,258.4 L583.0,258.0 L583.5,257.0 L584.0,255.6 L584.5,254.4 L585.0,250.5 L585.5,251.8 L586.0,252.9 L586.5,253.6 L587.0,252.7 L587.5,254.0 L588.0,251.4 L588.5,255.7 L589.0,251.4 L589.5,252.2 L590.0,254.3 L590.5,253.5 L591.0,254.8 L591.5,254.4 L592.0,254.8 L592.5,256.0 L593.0,253.3 L593.5,252.0 L594.0,249.2 L594.5,253.2 L595.0,253.1 L595.5,249.7 L596.0,252.4 L596.5,253.8 L597.0,253.1 L597.5,253.5 L598.0,257.3 M598.5,262.0 L599.0,259.1 L599.5,255.7 L600.0,260.1" fill="none" stroke="#f2e88a" stroke-width="1.5" stroke-linejoin="round"/>
</g>
</svg>
<div style="position:absolute;left:136.2px;top:336.6px;width:3px;height:5px;background:#142028;box-shadow:0 0 0 0.5px #305858"></div><div style="position:absolute;left:137px;top:337.8px;width:1.6px;height:1.2px;background:#80c070"></div>
</body></html>
